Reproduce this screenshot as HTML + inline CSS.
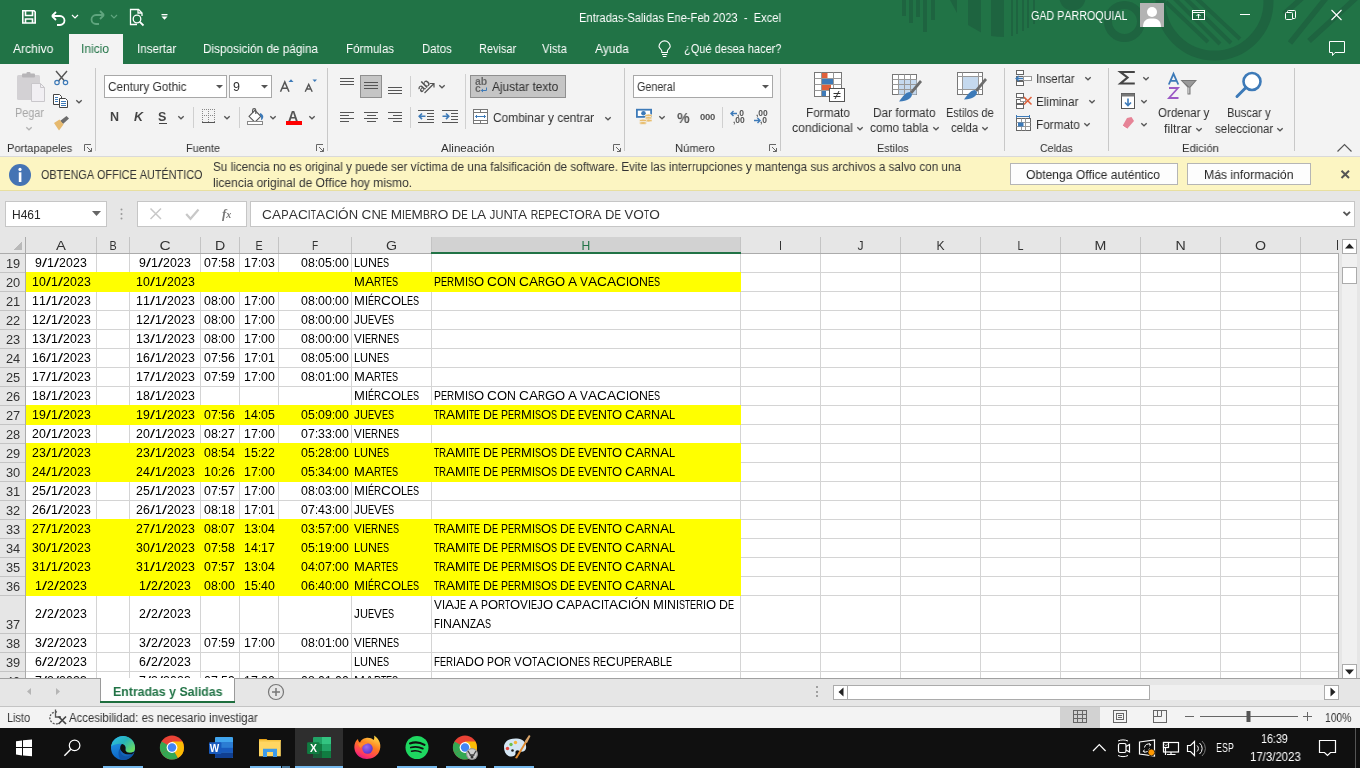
<!DOCTYPE html><html><head><meta charset="utf-8"><style>
*{margin:0;padding:0;box-sizing:border-box}
html,body{width:1360px;height:768px;overflow:hidden;background:#f3f3f3;font-family:"Liberation Sans",sans-serif;font-kerning:none}
.a{position:absolute}
.t{position:absolute;white-space:pre;line-height:1;transform-origin:0 0;font-kerning:none;will-change:transform}
svg{position:absolute;overflow:visible;will-change:transform}
svg text{font-family:"Liberation Sans",sans-serif;font-kerning:none}
</style></head><body><div class="a" style="left:0;top:0;width:1360px;height:64px;background:#217346"></div>
<svg style="left:0;top:0" width="1360" height="64" viewBox="0 0 1360 64">
<g fill="#1e6440">
<rect x="902" y="0" width="4" height="16"/><rect x="909" y="0" width="4" height="23"/><rect x="916" y="0" width="4" height="17"/>
<rect x="923" y="0" width="4" height="32"/><rect x="931" y="0" width="4" height="20"/>
<path d="M950 0 L957 0 L957 13 Z"/><circle cx="1072.5" cy="-2.5" r="13"/>
<path d="M968 0 H981 V32.5 L968 25 Z"/>
<path d="M991 0 H1004 V37 Q998 37 991 36 Z"/>
<rect x="1011" y="0" width="2" height="36"/><rect x="1016" y="0" width="2" height="34"/><rect x="1022" y="0" width="2" height="31"/>
<rect x="1027" y="0" width="2" height="28"/><rect x="1033" y="0" width="2" height="24"/>
</g>
<g fill="none" stroke="#1e6440">
<circle cx="1124.5" cy="21.5" r="16.5" stroke-width="8"/>
<circle cx="1214.5" cy="1.5" r="54" stroke-width="10"/>
<path d="M1166 2 L1208 42 M1174 -2 L1220 44 M1183 -4 L1231 43 M1193 -5 L1240 39" stroke-width="4"/>
<path d="M1326 -2 L1290 43 M1356 -2 L1309 41 M1302 -2 L1284 14" stroke-width="5.5"/>
</g>
</svg>
<svg style="left:0;top:0" width="200" height="34" viewBox="0 0 200 34">
<g fill="none" stroke="#fff" stroke-width="1.6">
<path d="M22.8 10.8 H34 L35.2 12 V23 H22.8 Z"/>
<path d="M25.5 11 V15.5 H32.5 V11"/>
<path d="M25.5 23 V19 H32.5 V23"/>
<path d="M52 16 L56 12 M52 16 L56 20 M52 16 H60 A4.5 4.5 0 0 1 60 25 H57" stroke-width="1.8"/>
<path d="M72 15 L75 18 L78 15" stroke-width="1.2"/>
</g>
<g fill="none" stroke="#5fa57e" stroke-width="1.8">
<path d="M104 15 L100 11 M104 15 L100 19 M104 15 H96 A4.5 4.5 0 0 0 96 24 H99"/>
<path d="M111 15 L114 18 L117 15" stroke-width="1.2"/>
</g>
<g fill="none" stroke="#fff" stroke-width="1.3">
<path d="M137 24.5 H130.5 V9.5 H138.5 L142 13 V16"/>
<path d="M138 9.5 V13 H142"/>
<circle cx="137" cy="19" r="3.8"/>
<path d="M139.8 21.8 L143.5 25.5" stroke-width="1.8"/>
</g>
<g fill="#fff"><rect x="161.5" y="14" width="6" height="1.3"/><path d="M161.5 16.5 H167.5 L164.5 19.8 Z"/></g>
</svg>
<div class="t " style="left:578.50px;top:12.34px;font-size:12px;color:#fff;font-weight:normal;transform:scaleX(0.9290);">Entradas-Salidas Ene-Feb 2023  -  Excel</div>
<div class="t " style="left:1031.00px;top:9.62px;font-size:12.5px;color:#fff;font-weight:normal;transform:scaleX(0.8576);">GAD PARROQUIAL</div>
<svg style="left:1140px;top:3px" width="24" height="24" viewBox="0 0 24 24">
<rect width="24" height="24" fill="#b3b3b3"/>
<circle cx="12" cy="9" r="5" fill="#fff"/>
<path d="M3 24 C3 17 7 15.5 12 15.5 C17 15.5 21 17 21 24 Z" fill="#fff"/>
</svg>
<svg style="left:1180px;top:0" width="180" height="64" viewBox="1180 0 180 64">
<g fill="none" stroke="#fff" stroke-width="1">
<rect x="1192.5" y="10.5" width="12" height="9"/>
<path d="M1192.5 12.5 H1204.5"/>
<path d="M1198.5 18.5 V14 M1196.5 16 L1198.5 14 L1200.5 16"/>
<path d="M1240 14.5 H1250"/>
<rect x="1285.5" y="12.5" width="7" height="7" rx="1"/>
<path d="M1287.5 12.5 V11.5 Q1287.5 10.5 1288.5 10.5 H1294.5 Q1295.5 10.5 1295.5 11.5 V17.5 Q1295.5 18.5 1294.5 18.5 H1292.5"/>
<path d="M1331.5 10 L1341.5 20 M1341.5 10 L1331.5 20" stroke-width="1.1"/>
<path d="M1329.5 41.5 H1344.5 V52.5 H1335 L1332.5 55.5 V52.5 H1329.5 Z"/>
</g></svg>
<div class="a" style="left:69px;top:34px;width:54px;height:31px;background:#f3f3f3"></div>
<div class="t " style="left:13.00px;top:43.17px;font-size:12.5px;color:#fff;font-weight:normal;transform:scaleX(0.9657);">Archivo</div>
<div class="t " style="left:81.25px;top:43.17px;font-size:12.5px;color:#217346;font-weight:normal;transform:scaleX(0.9595);">Inicio</div>
<div class="t " style="left:137.00px;top:43.17px;font-size:12.5px;color:#fff;font-weight:normal;transform:scaleX(0.9262);">Insertar</div>
<div class="t " style="left:203.25px;top:43.17px;font-size:12.5px;color:#fff;font-weight:normal;transform:scaleX(0.9403);">Disposición de página</div>
<div class="t " style="left:346.20px;top:43.17px;font-size:12.5px;color:#fff;font-weight:normal;transform:scaleX(0.9233);">Fórmulas</div>
<div class="t " style="left:422.00px;top:43.17px;font-size:12.5px;color:#fff;font-weight:normal;transform:scaleX(0.9095);">Datos</div>
<div class="t " style="left:478.80px;top:43.17px;font-size:12.5px;color:#fff;font-weight:normal;transform:scaleX(0.8780);">Revisar</div>
<div class="t " style="left:542.40px;top:43.17px;font-size:12.5px;color:#fff;font-weight:normal;transform:scaleX(0.8996);">Vista</div>
<div class="t " style="left:594.80px;top:43.17px;font-size:12.5px;color:#fff;font-weight:normal;transform:scaleX(0.9536);">Ayuda</div>
<div class="t " style="left:684.00px;top:43.17px;font-size:12.5px;color:#fff;font-weight:normal;transform:scaleX(0.8825);">¿Qué desea hacer?</div>
<svg style="left:655px;top:38px" width="20" height="22" viewBox="655 38 20 22">
<g fill="none" stroke="#fff" stroke-width="1.1">
<path d="M661.8 52.5 V51 C661.8 49.5 659 48.2 659 46.5 A5.6 5.6 0 0 1 670.2 46.5 C670.2 48.2 667.4 49.5 667.4 51 V52.5 Z"/>
<path d="M662 54.5 H667.2 M662.8 56.5 H666.4"/>
</g></svg>
<div class="a" style="left:0;top:64px;width:1360px;height:92px;background:#f3f3f3"></div>
<div class="a" style="left:0;top:156px;width:1360px;height:1px;background:#d9d9d9"></div>
<div class="a" style="left:95.0px;top:68px;width:1px;height:83px;background:#c8c8c8"></div>
<div class="a" style="left:327.0px;top:68px;width:1px;height:83px;background:#c8c8c8"></div>
<div class="a" style="left:624.0px;top:68px;width:1px;height:83px;background:#c8c8c8"></div>
<div class="a" style="left:780.0px;top:68px;width:1px;height:83px;background:#c8c8c8"></div>
<div class="a" style="left:1004.0px;top:68px;width:1px;height:83px;background:#c8c8c8"></div>
<div class="a" style="left:1108.0px;top:68px;width:1px;height:83px;background:#c8c8c8"></div>
<div class="a" style="left:1294.0px;top:68px;width:1px;height:83px;background:#c8c8c8"></div>
<div class="t " style="left:6.80px;top:142.97px;font-size:11.5px;color:#303030;font-weight:normal;transform:scaleX(0.9621);">Portapapeles</div>
<div class="t " style="left:185.60px;top:142.97px;font-size:11.5px;color:#303030;font-weight:normal;transform:scaleX(0.9496);">Fuente</div>
<div class="t " style="left:441.00px;top:142.97px;font-size:11.5px;color:#303030;font-weight:normal;transform:scaleX(1.0082);">Alineación</div>
<div class="t " style="left:674.60px;top:142.97px;font-size:11.5px;color:#303030;font-weight:normal;transform:scaleX(0.9731);">Número</div>
<div class="t " style="left:876.60px;top:142.97px;font-size:11.5px;color:#303030;font-weight:normal;transform:scaleX(0.9389);">Estilos</div>
<div class="t " style="left:1039.70px;top:142.97px;font-size:11.5px;color:#303030;font-weight:normal;transform:scaleX(0.9163);">Celdas</div>
<div class="t " style="left:1182.40px;top:142.97px;font-size:11.5px;color:#303030;font-weight:normal;transform:scaleX(0.9783);">Edición</div>
<svg style="left:84px;top:144px" width="9" height="9" viewBox="0 0 9 9"><g fill="none" stroke="#666" stroke-width="1">
<path d="M0.5 7 V0.5 H7"/><path d="M3 3 L7.5 7.5 M7.5 4 V7.5 H4"/></g></svg>
<svg style="left:316px;top:144px" width="9" height="9" viewBox="0 0 9 9"><g fill="none" stroke="#666" stroke-width="1">
<path d="M0.5 7 V0.5 H7"/><path d="M3 3 L7.5 7.5 M7.5 4 V7.5 H4"/></g></svg>
<svg style="left:613px;top:144px" width="9" height="9" viewBox="0 0 9 9"><g fill="none" stroke="#666" stroke-width="1">
<path d="M0.5 7 V0.5 H7"/><path d="M3 3 L7.5 7.5 M7.5 4 V7.5 H4"/></g></svg>
<svg style="left:769px;top:144px" width="9" height="9" viewBox="0 0 9 9"><g fill="none" stroke="#666" stroke-width="1">
<path d="M0.5 7 V0.5 H7"/><path d="M3 3 L7.5 7.5 M7.5 4 V7.5 H4"/></g></svg>
<svg style="left:1336px;top:143px" width="17" height="10" viewBox="0 0 17 10"><path d="M1.5 8.5 L8.5 1.5 L15.5 8.5" fill="none" stroke="#555" stroke-width="1.2"/></svg>
<svg style="left:14px;top:70px" width="34" height="34" viewBox="14 70 34 34">
<rect x="17" y="75" width="23" height="25" rx="1.5" fill="#d3d1d4"/>
<rect x="22" y="73.5" width="13" height="4" rx="1" fill="#b7b5b8"/>
<rect x="26.5" y="72" width="4" height="3" rx="1" fill="#b7b5b8"/>
<path d="M31.5 83.5 H40.5 L44.5 87.5 V101.5 H31.5 Z" fill="#f1eff3" stroke="#c9c7cb" stroke-width="1"/>
<path d="M40.5 83.5 V87.5 H44.5" fill="none" stroke="#c9c7cb" stroke-width="1"/>
</svg>
<div class="t " style="left:14.60px;top:107.04px;font-size:12px;color:#a6a6a6;font-weight:normal;transform:scaleX(0.9056);">Pegar</div>
<svg style="left:25px;top:126.0px" width="8" height="5" viewBox="0 0 8 5"><path d="M1.3 1.2 L4 3.8 L6.7 1.2" fill="none" stroke="#b3b3b3" stroke-width="1.3"/></svg>
<svg style="left:52px;top:69px" width="20" height="64" viewBox="52 69 20 64">
<g fill="none" stroke="#555" stroke-width="1.4"><path d="M56 71 L64.5 81 M67 71 L58.5 81"/></g>
<g fill="none" stroke="#3d7ab8" stroke-width="1.2"><circle cx="57" cy="82.5" r="2.2"/><circle cx="65.5" cy="82.5" r="2.2"/></g>
<g fill="#fff" stroke="#444" stroke-width="1">
<path d="M53.5 94.5 H59.5 L61.5 96.5 V104.5 H53.5 Z"/>
<path d="M59.5 98.5 H65.5 L67.5 100.5 V107.5 H59.5 Z"/></g>
<g fill="#3d7ab8"><rect x="55" y="97" width="3" height="1"/><rect x="55" y="99" width="3" height="1"/><rect x="55" y="101" width="3" height="1"/>
<rect x="61" y="101" width="5" height="1"/><rect x="61" y="103" width="5" height="1"/><rect x="61" y="105" width="5" height="1"/></g>
<path d="M60 121 L66.5 116 L69 118.5 L63 124 Z" fill="#6c6c6c"/>
<path d="M54 123 L59.5 119.5 L63.5 124.5 L59 130.5 Z" fill="#e6b96e"/>
</svg>
<svg style="left:75px;top:99.0px" width="8" height="5" viewBox="0 0 8 5"><path d="M1.3 1.2 L4 3.8 L6.7 1.2" fill="none" stroke="#555" stroke-width="1.3"/></svg>
<div class="a" style="left:104px;top:75px;width:123px;height:23px;background:#fff;border:1px solid #a8a8a8"></div>
<div class="a" style="left:229px;top:75px;width:43px;height:23px;background:#fff;border:1px solid #a8a8a8"></div>
<div class="t " style="left:107.60px;top:80.92px;font-size:12.5px;color:#303030;font-weight:normal;transform:scaleX(0.9428);">Century Gothic</div>
<div class="t " style="left:232.80px;top:80.92px;font-size:12.5px;color:#303030;font-weight:normal;">9</div>
<svg style="left:216.1px;top:84.5px" width="7" height="4" viewBox="0 0 7 4"><path d="M0 0 H7 L3.5 3.5 Z" fill="#555"/></svg>
<svg style="left:261.0px;top:84.5px" width="7" height="4" viewBox="0 0 7 4"><path d="M0 0 H7 L3.5 3.5 Z" fill="#555"/></svg>
<svg style="left:278px;top:78px" width="40" height="16" viewBox="278 78 40 16">
<path d="M280.5 91.8 L284.8 82 L289 91.8 M282.2 88.3 H287.4" fill="none" stroke="#555" stroke-width="1.5"/>
<path d="M288.5 82 L291 79.2 L293.5 82 Z" fill="#3d7ab8"/>
<path d="M305.2 91.8 L308.7 84.4 L312.2 91.8 M306.6 89 H310.8" fill="none" stroke="#555" stroke-width="1.4"/>
<path d="M312.5 79.5 H317 L314.75 82 Z" fill="#3d7ab8"/>
</svg>
<div class="t" style="left:110.3px;top:111px;font-size:12.5px;font-weight:bold;color:#444">N</div>
<div class="t" style="left:133.5px;top:111px;font-size:12.5px;font-weight:bold;font-style:italic;color:#444">K</div>
<div class="t" style="left:158.4px;top:111px;font-size:12.5px;font-weight:bold;color:#444">S</div>
<div class="a" style="left:158.5px;top:123px;width:8.5px;height:1px;background:#444"></div>
<svg style="left:177px;top:115.0px" width="8" height="5" viewBox="0 0 8 5"><path d="M1.3 1.2 L4 3.8 L6.7 1.2" fill="none" stroke="#555" stroke-width="1.3"/></svg>
<div class="a" style="left:193px;top:107px;width:1px;height:21px;background:#d0d0d0"></div>
<div class="a" style="left:239px;top:107px;width:1px;height:21px;background:#d0d0d0"></div>
<svg style="left:200px;top:108px" width="20" height="18" viewBox="200 108 20 18" shape-rendering="crispEdges"><g fill="#888"><rect x="202" y="109" width="1" height="1"/><rect x="202" y="115" width="1" height="1"/><rect x="202" y="109" width="1" height="1"/><rect x="208" y="109" width="1" height="1"/><rect x="214" y="109" width="1" height="1"/><rect x="204" y="109" width="1" height="1"/><rect x="204" y="115" width="1" height="1"/><rect x="202" y="111" width="1" height="1"/><rect x="208" y="111" width="1" height="1"/><rect x="214" y="111" width="1" height="1"/><rect x="206" y="109" width="1" height="1"/><rect x="206" y="115" width="1" height="1"/><rect x="202" y="113" width="1" height="1"/><rect x="208" y="113" width="1" height="1"/><rect x="214" y="113" width="1" height="1"/><rect x="208" y="109" width="1" height="1"/><rect x="208" y="115" width="1" height="1"/><rect x="202" y="115" width="1" height="1"/><rect x="208" y="115" width="1" height="1"/><rect x="214" y="115" width="1" height="1"/><rect x="210" y="109" width="1" height="1"/><rect x="210" y="115" width="1" height="1"/><rect x="202" y="117" width="1" height="1"/><rect x="208" y="117" width="1" height="1"/><rect x="214" y="117" width="1" height="1"/><rect x="212" y="109" width="1" height="1"/><rect x="212" y="115" width="1" height="1"/><rect x="202" y="119" width="1" height="1"/><rect x="208" y="119" width="1" height="1"/><rect x="214" y="119" width="1" height="1"/><rect x="214" y="109" width="1" height="1"/><rect x="214" y="115" width="1" height="1"/><rect x="202" y="121" width="1" height="1"/><rect x="208" y="121" width="1" height="1"/><rect x="214" y="121" width="1" height="1"/><rect x="202" y="115" width="1" height="1"/><rect x="204" y="115" width="1" height="1"/><rect x="206" y="115" width="1" height="1"/><rect x="208" y="115" width="1" height="1"/><rect x="210" y="115" width="1" height="1"/><rect x="212" y="115" width="1" height="1"/><rect x="214" y="115" width="1" height="1"/></g><rect x="202" y="122" width="13" height="1" fill="#555"/></svg>
<svg style="left:223px;top:115.0px" width="8" height="5" viewBox="0 0 8 5"><path d="M1.3 1.2 L4 3.8 L6.7 1.2" fill="none" stroke="#555" stroke-width="1.3"/></svg>
<svg style="left:244px;top:107px" width="22" height="20" viewBox="244 107 22 20">
<path d="M249 116.3 L254.9 110.4 L260.8 116.3 L254.9 122.2 Z" fill="#fff" stroke="#555" stroke-width="1.1"/>
<path d="M252.6 113 V110.2 Q252.6 108.6 254.2 108.6 Q255.8 108.6 255.8 110.2 V114" fill="none" stroke="#555" stroke-width="1.1"/>
<path d="M260 113 Q263.8 114.5 263.2 117.5 Q262.8 119.5 261 120.3 Q261.8 117 260 115.5 Z" fill="#3d7ab8"/>
<rect x="247.5" y="121.5" width="15" height="3" fill="#fff" stroke="#888" stroke-width="1"/>
</svg>
<svg style="left:269px;top:115.0px" width="8" height="5" viewBox="0 0 8 5"><path d="M1.3 1.2 L4 3.8 L6.7 1.2" fill="none" stroke="#555" stroke-width="1.3"/></svg>
<div class="t" style="left:288.2px;top:109.3px;font-size:14px;font-weight:bold;color:#555">A</div>
<div class="a" style="left:286px;top:121px;width:16px;height:4px;background:#ff0000"></div>
<svg style="left:308px;top:115.0px" width="8" height="5" viewBox="0 0 8 5"><path d="M1.3 1.2 L4 3.8 L6.7 1.2" fill="none" stroke="#555" stroke-width="1.3"/></svg>
<div class="a" style="left:360px;top:75px;width:22px;height:23px;background:#c5c5c5;border:1px solid #8f8f8f"></div>
<svg style="left:330px;top:70px" width="140" height="60" viewBox="330 70 140 60"><g fill="#555" shape-rendering="crispEdges"><rect x="340" y="78" width="14" height="1"/><rect x="340" y="81" width="14" height="1"/><rect x="340" y="84" width="14" height="1"/><rect x="364" y="82" width="14" height="1"/><rect x="364" y="85" width="14" height="1"/><rect x="364" y="88" width="14" height="1"/><rect x="388" y="87" width="14" height="1"/><rect x="388" y="90" width="14" height="1"/><rect x="388" y="93" width="14" height="1"/><rect x="340" y="112" width="14" height="1"/><rect x="340" y="115" width="9" height="1"/><rect x="340" y="118" width="14" height="1"/><rect x="340" y="121" width="9" height="1"/><rect x="364" y="112" width="14" height="1"/><rect x="367" y="115" width="9" height="1"/><rect x="364" y="118" width="14" height="1"/><rect x="367" y="121" width="9" height="1"/><rect x="388" y="112" width="14" height="1"/><rect x="393" y="115" width="9" height="1"/><rect x="388" y="118" width="14" height="1"/><rect x="393" y="121" width="9" height="1"/><rect x="418" y="110" width="16" height="1"/><rect x="418" y="122" width="16" height="1"/><rect x="427" y="113" width="7" height="1"/><rect x="427" y="116" width="7" height="1"/><rect x="427" y="119" width="7" height="1"/><rect x="442" y="110" width="16" height="1"/><rect x="442" y="122" width="16" height="1"/><rect x="451" y="113" width="7" height="1"/><rect x="451" y="116" width="7" height="1"/><rect x="451" y="119" width="7" height="1"/></g><g fill="none" stroke="#3d7ab8" stroke-width="1.6"><path d="M419 116.3 H425.5 M422 113.5 L419.2 116.3 L422 119.1"/><path d="M442.5 116.3 H449 M446 113.5 L448.8 116.3 L446 119.1"/></g><g fill="none" stroke="#555" stroke-width="1.2"><path d="M424.5 93 L434 83.5 M430 83.5 H434 V87.5"/></g><text x="0" y="0" font-size="11.5" font-weight="bold" fill="#555" transform="translate(421.5,93) rotate(-45)">ab</text></svg>
<div class="a" style="left:410px;top:76px;width:1px;height:21px;background:#d0d0d0"></div>
<div class="a" style="left:410px;top:107px;width:1px;height:21px;background:#d0d0d0"></div>
<div class="a" style="left:465px;top:74px;width:1px;height:55px;background:#d0d0d0"></div>
<svg style="left:438px;top:84.0px" width="8" height="5" viewBox="0 0 8 5"><path d="M1.3 1.2 L4 3.8 L6.7 1.2" fill="none" stroke="#555" stroke-width="1.3"/></svg>
<div class="a" style="left:470px;top:75px;width:96px;height:23px;background:#c5c5c5;border:1px solid #8f8f8f"></div>
<div class="t" style="left:474.5px;top:77.5px;font-size:10.5px;font-weight:bold;color:#666;line-height:7px">ab<br>c</div>
<svg style="left:480px;top:87px" width="8" height="6" viewBox="480 87 8 6"><path d="M486.5 87.5 V90.5 H481.5 M483 89 L481.3 90.5 L483 92" fill="none" stroke="#3d7ab8" stroke-width="1"/></svg>
<div class="t " style="left:492.00px;top:80.82px;font-size:12.5px;color:#303030;font-weight:normal;transform:scaleX(0.9543);">Ajustar texto</div>
<svg style="left:472px;top:108px" width="17" height="17" viewBox="472 108 17 17">
<rect x="473.5" y="109.5" width="14" height="14" fill="#fff" stroke="#777" stroke-width="1"/>
<path d="M473.5 112.5 H487.5 M473.5 120.5 H487.5 M480.5 109.5 V112.5 M480.5 120.5 V123.5" stroke="#777" stroke-width="1"/>
<path d="M475.5 116.5 H485.5 M477 115 L475.5 116.5 L477 118 M484 115 L485.5 116.5 L484 118" fill="none" stroke="#3d7ab8" stroke-width="1"/>
</svg>
<div class="t " style="left:492.60px;top:111.67px;font-size:12.5px;color:#303030;font-weight:normal;transform:scaleX(0.9521);">Combinar y centrar</div>
<svg style="left:604px;top:115.5px" width="8" height="5" viewBox="0 0 8 5"><path d="M1.3 1.2 L4 3.8 L6.7 1.2" fill="none" stroke="#555" stroke-width="1.3"/></svg>
<div class="a" style="left:633px;top:75px;width:140px;height:23px;background:#fff;border:1px solid #a8a8a8"></div>
<div class="t " style="left:636.90px;top:80.92px;font-size:12.5px;color:#303030;font-weight:normal;transform:scaleX(0.8568);">General</div>
<svg style="left:761.9px;top:84.5px" width="7" height="4" viewBox="0 0 7 4"><path d="M0 0 H7 L3.5 3.5 Z" fill="#555"/></svg>
<svg style="left:634px;top:107px" width="22" height="20" viewBox="634 107 22 20">
<rect x="636" y="108.8" width="16" height="9" fill="#3d7ab8"/>
<path d="M637.8 110.6 H650.2 V116 H637.8 Z" fill="#fff"/>
<circle cx="643.5" cy="113.3" r="2.3" fill="#3d7ab8"/>
<g fill="#e8bd6e" stroke="#f3f3f3" stroke-width="0.7">
<ellipse cx="648.5" cy="115.5" rx="3.6" ry="1.5"/><ellipse cx="648.5" cy="118" rx="3.6" ry="1.5"/><ellipse cx="648.5" cy="120.5" rx="3.6" ry="1.5"/>
<ellipse cx="643" cy="120.5" rx="3.6" ry="1.5"/><ellipse cx="643" cy="123" rx="3.6" ry="1.5"/>
</g>
</svg>
<svg style="left:658px;top:115.0px" width="8" height="5" viewBox="0 0 8 5"><path d="M1.3 1.2 L4 3.8 L6.7 1.2" fill="none" stroke="#555" stroke-width="1.3"/></svg>
<div class="t" style="left:677px;top:110px;font-size:15.5px;font-weight:bold;color:#555;transform:scaleX(0.92)">%</div>
<div class="t" style="left:699.5px;top:111.8px;font-size:9.5px;color:#555;font-weight:bold;letter-spacing:-0.3px">000</div>
<div class="a" style="left:722px;top:107px;width:1px;height:21px;background:#d0d0d0"></div>
<div class="t" style="left:737px;top:109px;font-size:8.5px;color:#555;font-weight:bold">,0</div>
<div class="t" style="left:733px;top:116px;font-size:8.5px;color:#555;font-weight:bold">,00</div>
<div class="t" style="left:756px;top:109px;font-size:8.5px;color:#555;font-weight:bold">,00</div>
<div class="t" style="left:760px;top:116px;font-size:8.5px;color:#555;font-weight:bold">,0</div>
<svg style="left:728px;top:108px" width="44" height="18" viewBox="728 108 44 18"><g fill="none" stroke="#3d7ab8" stroke-width="1.4">
<path d="M731 113.5 H737 M733.5 111 L731 113.5 L733.5 116"/><path d="M754 120.5 H760 M757.5 118 L760 120.5 L757.5 123"/></g></svg>
<svg style="left:812px;top:70px" width="180" height="34" viewBox="812 70 180 34">
<g>
<rect x="814.5" y="72.5" width="27" height="24" fill="#fff" stroke="#777" stroke-width="1"/>
<path d="M814.5 78.5 H841.5 M814.5 84.5 H841.5 M814.5 90.5 H841.5 M821.5 72.5 V96.5 M833.5 72.5 V96.5" stroke="#999" stroke-width="1"/>
<rect x="822" y="73" width="5.5" height="5" fill="#e0603a"/><rect x="822" y="79" width="11" height="5" fill="#3d7ab8"/>
<rect x="822" y="85" width="9" height="5" fill="#e0603a"/><rect x="822" y="91" width="4" height="5" fill="#3d7ab8"/>
<rect x="829.5" y="88.5" width="15" height="13" fill="#fff" stroke="#555" stroke-width="1"/>
<path d="M833.5 93.5 H840.5 M833.5 96.5 H840.5 M839 91 L835 99" stroke="#333" stroke-width="1"/>
</g>
<g>
<rect x="892.5" y="74.5" width="24" height="20" fill="#fff" stroke="#777" stroke-width="1"/>
<rect x="898.5" y="79.5" width="18" height="15" fill="#c5d9ee"/>
<path d="M892.5 79.5 H916.5 M892.5 84.5 H916.5 M892.5 89.5 H916.5 M898.5 74.5 V94.5 M904.5 74.5 V94.5 M910.5 74.5 V94.5" stroke="#999" stroke-width="1"/>
<path d="M910 92 L920 80 L922 82 L912 94 Z" fill="#6c6c6c"/>
<path d="M899 101.5 C903 96 906 92 910 92 L912 94 C912 98 908 101 899 101.5 Z" fill="#3d7ab8"/>
</g>
<g>
<rect x="957.5" y="72.5" width="25" height="22" fill="#fff" stroke="#777" stroke-width="1"/>
<rect x="963" y="77" width="15" height="12" fill="#c5d9ee"/>
<path d="M957.5 76.5 H982.5 M957.5 89.5 H982.5 M962.5 72.5 V94.5 M978.5 72.5 V94.5" stroke="#999" stroke-width="1"/>
<path d="M975 90 L985 78 L987 80 L977 92 Z" fill="#6c6c6c"/>
<path d="M964 99.5 C968 94 971 90 975 90 L977 92 C977 96 973 99 964 99.5 Z" fill="#3d7ab8"/>
</g>
</svg>
<div class="t " style="left:805.60px;top:106.72px;font-size:12.5px;color:#303030;font-weight:normal;transform:scaleX(0.9454);">Formato</div>
<div class="t " style="left:791.70px;top:122.42px;font-size:12.5px;color:#303030;font-weight:normal;transform:scaleX(0.9737);">condicional</div>
<svg style="left:856px;top:126.0px" width="8" height="5" viewBox="0 0 8 5"><path d="M1.3 1.2 L4 3.8 L6.7 1.2" fill="none" stroke="#555" stroke-width="1.3"/></svg>
<div class="t " style="left:873.20px;top:106.72px;font-size:12.5px;color:#303030;font-weight:normal;transform:scaleX(0.9486);">Dar formato</div>
<div class="t " style="left:869.90px;top:122.42px;font-size:12.5px;color:#303030;font-weight:normal;transform:scaleX(0.9535);">como tabla</div>
<svg style="left:932.3px;top:126.0px" width="8" height="5" viewBox="0 0 8 5"><path d="M1.3 1.2 L4 3.8 L6.7 1.2" fill="none" stroke="#555" stroke-width="1.3"/></svg>
<div class="t " style="left:945.60px;top:106.72px;font-size:12.5px;color:#303030;font-weight:normal;transform:scaleX(0.8802);">Estilos de</div>
<div class="t " style="left:950.50px;top:122.42px;font-size:12.5px;color:#303030;font-weight:normal;transform:scaleX(0.9069);">celda</div>
<svg style="left:981.2px;top:126.0px" width="8" height="5" viewBox="0 0 8 5"><path d="M1.3 1.2 L4 3.8 L6.7 1.2" fill="none" stroke="#555" stroke-width="1.3"/></svg>
<svg style="left:1012px;top:68px" width="24" height="66" viewBox="1012 68 24 66">
<g fill="#fff" stroke="#666" stroke-width="1">
<rect x="1016.5" y="70.5" width="7" height="4"/><rect x="1016.5" y="76.5" width="7" height="4"/><rect x="1016.5" y="81.5" width="7" height="4"/>
<rect x="1023.5" y="76.5" width="8" height="4" stroke="#999"/>
<rect x="1016.5" y="93.5" width="7" height="4"/><rect x="1016.5" y="99.5" width="7" height="4"/><rect x="1016.5" y="104.5" width="7" height="4"/>
<rect x="1020.5" y="98.5" width="5" height="3" stroke="#999"/>
<rect x="1016.5" y="118.5" width="14" height="12"/>
</g>
<path d="M1016.5 122.5 H1030.5 M1016.5 126.5 H1030.5 M1021.5 118.5 V130.5 M1025.5 118.5 V130.5" stroke="#999" stroke-width="1"/>
<rect x="1018" y="122.5" width="5.5" height="4" fill="#3d7ab8"/>
<path d="M1016 116.5 H1030 M1016.5 115 V118 M1029.5 115 V118" stroke="#3d7ab8" stroke-width="1"/>
<path d="M1016 78.5 H1023 M1019 76 L1016.2 78.5 L1019 81" fill="none" stroke="#3d7ab8" stroke-width="1.4"/>
<path d="M1024 97 L1031.5 104.5 M1031.5 97 L1024 104.5" stroke="#e0603a" stroke-width="1.5"/>
</svg>
<div class="t " style="left:1035.50px;top:73.12px;font-size:12.5px;color:#303030;font-weight:normal;transform:scaleX(0.9109);">Insertar</div>
<svg style="left:1084px;top:76.0px" width="8" height="5" viewBox="0 0 8 5"><path d="M1.3 1.2 L4 3.8 L6.7 1.2" fill="none" stroke="#555" stroke-width="1.3"/></svg>
<div class="t " style="left:1035.50px;top:95.92px;font-size:12.5px;color:#303030;font-weight:normal;transform:scaleX(0.9414);">Eliminar</div>
<svg style="left:1088px;top:99.0px" width="8" height="5" viewBox="0 0 8 5"><path d="M1.3 1.2 L4 3.8 L6.7 1.2" fill="none" stroke="#555" stroke-width="1.3"/></svg>
<div class="t " style="left:1035.50px;top:118.72px;font-size:12.5px;color:#303030;font-weight:normal;transform:scaleX(0.9433);">Formato</div>
<svg style="left:1083.3px;top:122.0px" width="8" height="5" viewBox="0 0 8 5"><path d="M1.3 1.2 L4 3.8 L6.7 1.2" fill="none" stroke="#555" stroke-width="1.3"/></svg>
<svg style="left:1116px;top:68px" width="85" height="66" viewBox="1116 68 85 66">
<path d="M1134.8 72 H1120.5 L1127.5 77.5 L1120.5 83.5 H1134.8" fill="none" stroke="#444" stroke-width="2.2"/>
<rect x="1121.5" y="93.5" width="13" height="15" fill="#fff" stroke="#555" stroke-width="1"/>
<rect x="1121.5" y="93.5" width="13" height="3" fill="#777"/>
<path d="M1128 98.5 V105 M1125 102.5 L1128 105.5 L1131 102.5" fill="none" stroke="#3d7ab8" stroke-width="1.6"/>
<path d="M1127 118 L1131.5 117 L1134 121 L1127 129 L1122.5 126 Z" fill="#e68396"/>
<path d="M1121.8 125.5 L1127.2 129.2" stroke="#fff" stroke-width="1"/>
<path d="M1168.8 84.5 L1173.5 73.8 L1178.3 84.5 M1170.5 80.8 H1176.5" fill="none" stroke="#3d7ab8" stroke-width="1.8"/>
<path d="M1169 88 H1178 L1169 98 H1178.5" fill="none" stroke="#9b59c5" stroke-width="1.8"/>
<path d="M1180.5 80 H1197 L1190.5 87.5 V94.5 H1187.5 V87.5 Z" fill="#777"/>
<path d="M1182.5 81 H1195 L1189.5 87" fill="#999"/>
<path d="M1188.8 87.5 V93.5" stroke="#fff" stroke-width="0.8"/>
</svg>
<svg style="left:1142px;top:76.0px" width="8" height="5" viewBox="0 0 8 5"><path d="M1.3 1.2 L4 3.8 L6.7 1.2" fill="none" stroke="#555" stroke-width="1.3"/></svg>
<svg style="left:1140px;top:98.5px" width="8" height="5" viewBox="0 0 8 5"><path d="M1.3 1.2 L4 3.8 L6.7 1.2" fill="none" stroke="#555" stroke-width="1.3"/></svg>
<svg style="left:1140px;top:122.0px" width="8" height="5" viewBox="0 0 8 5"><path d="M1.3 1.2 L4 3.8 L6.7 1.2" fill="none" stroke="#555" stroke-width="1.3"/></svg>
<svg style="left:1232px;top:70px" width="34" height="32" viewBox="1232 70 34 32">
<circle cx="1252" cy="81.5" r="8.5" fill="#fff" stroke="#3d7ab8" stroke-width="2.6"/>
<path d="M1246 87.5 L1237 96.5" stroke="#3d7ab8" stroke-width="3" stroke-linecap="round"/>
</svg>
<div class="t " style="left:1157.80px;top:106.92px;font-size:12.5px;color:#303030;font-weight:normal;transform:scaleX(0.9248);">Ordenar y</div>
<div class="t " style="left:1164.30px;top:122.62px;font-size:12.5px;color:#303030;font-weight:normal;transform:scaleX(0.9900);">filtrar</div>
<svg style="left:1195px;top:126.5px" width="8" height="5" viewBox="0 0 8 5"><path d="M1.3 1.2 L4 3.8 L6.7 1.2" fill="none" stroke="#555" stroke-width="1.3"/></svg>
<div class="t " style="left:1227.40px;top:106.92px;font-size:12.5px;color:#303030;font-weight:normal;transform:scaleX(0.8966);">Buscar y</div>
<div class="t " style="left:1214.70px;top:122.62px;font-size:12.5px;color:#303030;font-weight:normal;transform:scaleX(0.9221);">seleccionar</div>
<svg style="left:1276px;top:126.5px" width="8" height="5" viewBox="0 0 8 5"><path d="M1.3 1.2 L4 3.8 L6.7 1.2" fill="none" stroke="#555" stroke-width="1.3"/></svg>
<div class="a" style="left:0;top:157px;width:1360px;height:34px;background:#fcf5c2;border-bottom:1px solid #e8dfa0"></div>
<svg style="left:8px;top:163px" width="24" height="24" viewBox="8 163 24 24">
<circle cx="20" cy="175" r="11" fill="#4574b4"/>
<circle cx="20" cy="169.4" r="1.6" fill="#fff"/><rect x="18.8" y="172.3" width="2.6" height="9.7" fill="#fff"/>
</svg>
<div class="t " style="left:40.50px;top:169.09px;font-size:12px;color:#333;font-weight:normal;transform:scaleX(0.9039);">OBTENGA OFFICE AUTÉNTICO</div>
<div class="t " style="left:213.40px;top:161.22px;font-size:12.5px;color:#333;font-weight:normal;transform:scaleX(0.9386);">Su licencia no es original y puede ser víctima de una falsificación de software. Evite las interrupciones y mantenga sus archivos a salvo con una</div>
<div class="t " style="left:213.40px;top:176.52px;font-size:12.5px;color:#333;font-weight:normal;transform:scaleX(0.9649);">licencia original de Office hoy mismo.</div>
<div class="a" style="left:1010px;top:163px;width:168px;height:22px;background:#fdfdfd;border:1px solid #b5b5b5"></div>
<div class="t " style="left:1026.00px;top:168.52px;font-size:12.5px;color:#262626;font-weight:normal;transform:scaleX(0.9690);">Obtenga Office auténtico</div>
<div class="a" style="left:1187px;top:163px;width:124px;height:22px;background:#fdfdfd;border:1px solid #b5b5b5"></div>
<div class="t " style="left:1203.50px;top:168.52px;font-size:12.5px;color:#262626;font-weight:normal;transform:scaleX(0.9760);">Más información</div>
<svg style="left:1338px;top:168px" width="14" height="14" viewBox="1338 168 14 14"><path d="M1341.5 170.8 L1349 178 M1349 170.8 L1341.5 178" stroke="#555" stroke-width="2"/></svg>
<div class="a" style="left:0;top:191px;width:1360px;height:46px;background:#e6e6e6"></div>
<div class="a" style="left:5px;top:201px;width:102px;height:26px;background:#fff;border:1px solid #c6c6c6"></div>
<div class="t " style="left:12.00px;top:209.09px;font-size:12px;color:#262626;font-weight:normal;transform:scaleX(1.0004);">H461</div>
<svg style="left:92px;top:211px" width="9" height="5" viewBox="0 0 9 5"><path d="M0 0 H9 L4.5 5 Z" fill="#666"/></svg>
<svg style="left:119px;top:207px" width="5" height="14" viewBox="0 0 5 14"><g fill="#999"><circle cx="2.5" cy="2.5" r="1"/><circle cx="2.5" cy="7" r="1"/><circle cx="2.5" cy="11.5" r="1"/></g></svg>
<div class="a" style="left:137px;top:201px;width:110px;height:26px;background:#fff;border:1px solid #c6c6c6"></div>
<svg style="left:145px;top:205px" width="95" height="18" viewBox="145 205 95 18">
<path d="M150.5 208.5 L161 219 M161 208.5 L150.5 219" stroke="#c8c8c8" stroke-width="1.5"/>
<path d="M186.2 214 L190.5 218.8 L198.5 209.5" fill="none" stroke="#c8c8c8" stroke-width="2.2"/>
</svg>
<div class="t" style="left:222px;top:207px;font-size:13px;font-style:italic;font-weight:bold;color:#777;font-family:'Liberation Serif',serif">f<span style="font-size:10px">x</span></div>
<div class="a" style="left:250px;top:201px;width:1105px;height:26px;background:#fff;border:1px solid #c6c6c6"></div>
<svg style="left:1342px;top:210px" width="10" height="7" viewBox="0 0 10 7"><path d="M1.5 1.8 L4.8 5 L8 1.8" fill="none" stroke="#555" stroke-width="1.8"/></svg>
<svg style="left:0;top:0" width="1360" height="768" viewBox="0 0 1360 768"><text x="249.63 259.16 274.90 283.71 300.94 309.75 322.00 344.30 372.16 392.01 416.88 454.23 493.44 532.35 546.96 564.35 603.09 618.38" y="219.2" font-size="13" fill="#333" transform="scale(1.05,1)" >CAACACÓCMMOAACOAOO</text><text x="330.88 583.02 641.00" y="219.2" font-size="13" fill="#333" transform="scale(0.85,1)" >PUP</text><text x="384.78 418.96 502.63 528.86 537.66 588.93 663.37 731.26" y="219.2" font-size="13" fill="#333" transform="scale(0.80,1)" >IIIBRLRR</text><text x="478.04 789.01 875.39 990.77" y="219.2" font-size="13" fill="#333" transform="scale(0.65,1)" >TTTT</text><text x="348.69 371.39 451.78 503.51 605.06 624.47" y="219.2" font-size="13" fill="#333" >NNDNDV</text><text x="507.65 540.03 614.88 717.72 736.37 819.26" y="219.2" font-size="13" fill="#333" transform="scale(0.75,1)" >EEEEEE</text><text x="543.98" y="219.2" font-size="13" fill="#333" transform="scale(0.90,1)" >J</text></svg>
<svg style="left:0;top:0" width="1360" height="768" viewBox="0 0 1360 768" shape-rendering="crispEdges"><rect x="0" y="237" width="1338" height="17" fill="#e6e6e6"/><rect x="0" y="254" width="25" height="424" fill="#e6e6e6"/><rect x="26" y="254" width="1312" height="424" fill="#fff"/><rect x="431" y="237" width="310" height="17" fill="#d2d2d2"/><rect x="96" y="254" width="1" height="424" fill="#d4d4d4"/><rect x="129" y="254" width="1" height="424" fill="#d4d4d4"/><rect x="200" y="254" width="1" height="424" fill="#d4d4d4"/><rect x="239" y="254" width="1" height="424" fill="#d4d4d4"/><rect x="278" y="254" width="1" height="424" fill="#d4d4d4"/><rect x="351" y="254" width="1" height="424" fill="#d4d4d4"/><rect x="431" y="254" width="1" height="424" fill="#d4d4d4"/><rect x="740" y="254" width="1" height="424" fill="#d4d4d4"/><rect x="820" y="254" width="1" height="424" fill="#d4d4d4"/><rect x="900" y="254" width="1" height="424" fill="#d4d4d4"/><rect x="980" y="254" width="1" height="424" fill="#d4d4d4"/><rect x="1060" y="254" width="1" height="424" fill="#d4d4d4"/><rect x="1140" y="254" width="1" height="424" fill="#d4d4d4"/><rect x="1220" y="254" width="1" height="424" fill="#d4d4d4"/><rect x="1300" y="254" width="1" height="424" fill="#d4d4d4"/><rect x="26" y="272" width="1312" height="1" fill="#d4d4d4"/><rect x="0" y="272" width="25" height="1" fill="#c4c4c4"/><rect x="26" y="291" width="1312" height="1" fill="#d4d4d4"/><rect x="0" y="291" width="25" height="1" fill="#c4c4c4"/><rect x="26" y="310" width="1312" height="1" fill="#d4d4d4"/><rect x="0" y="310" width="25" height="1" fill="#c4c4c4"/><rect x="26" y="329" width="1312" height="1" fill="#d4d4d4"/><rect x="0" y="329" width="25" height="1" fill="#c4c4c4"/><rect x="26" y="348" width="1312" height="1" fill="#d4d4d4"/><rect x="0" y="348" width="25" height="1" fill="#c4c4c4"/><rect x="26" y="367" width="1312" height="1" fill="#d4d4d4"/><rect x="0" y="367" width="25" height="1" fill="#c4c4c4"/><rect x="26" y="386" width="1312" height="1" fill="#d4d4d4"/><rect x="0" y="386" width="25" height="1" fill="#c4c4c4"/><rect x="26" y="405" width="1312" height="1" fill="#d4d4d4"/><rect x="0" y="405" width="25" height="1" fill="#c4c4c4"/><rect x="26" y="424" width="1312" height="1" fill="#d4d4d4"/><rect x="0" y="424" width="25" height="1" fill="#c4c4c4"/><rect x="26" y="443" width="1312" height="1" fill="#d4d4d4"/><rect x="0" y="443" width="25" height="1" fill="#c4c4c4"/><rect x="26" y="462" width="1312" height="1" fill="#d4d4d4"/><rect x="0" y="462" width="25" height="1" fill="#c4c4c4"/><rect x="26" y="481" width="1312" height="1" fill="#d4d4d4"/><rect x="0" y="481" width="25" height="1" fill="#c4c4c4"/><rect x="26" y="500" width="1312" height="1" fill="#d4d4d4"/><rect x="0" y="500" width="25" height="1" fill="#c4c4c4"/><rect x="26" y="519" width="1312" height="1" fill="#d4d4d4"/><rect x="0" y="519" width="25" height="1" fill="#c4c4c4"/><rect x="26" y="538" width="1312" height="1" fill="#d4d4d4"/><rect x="0" y="538" width="25" height="1" fill="#c4c4c4"/><rect x="26" y="557" width="1312" height="1" fill="#d4d4d4"/><rect x="0" y="557" width="25" height="1" fill="#c4c4c4"/><rect x="26" y="576" width="1312" height="1" fill="#d4d4d4"/><rect x="0" y="576" width="25" height="1" fill="#c4c4c4"/><rect x="26" y="595" width="1312" height="1" fill="#d4d4d4"/><rect x="0" y="595" width="25" height="1" fill="#c4c4c4"/><rect x="26" y="633" width="1312" height="1" fill="#d4d4d4"/><rect x="0" y="633" width="25" height="1" fill="#c4c4c4"/><rect x="26" y="652" width="1312" height="1" fill="#d4d4d4"/><rect x="0" y="652" width="25" height="1" fill="#c4c4c4"/><rect x="26" y="671" width="1312" height="1" fill="#d4d4d4"/><rect x="0" y="671" width="25" height="1" fill="#c4c4c4"/><rect x="96" y="237" width="1" height="16" fill="#c4c4c4"/><rect x="129" y="237" width="1" height="16" fill="#c4c4c4"/><rect x="200" y="237" width="1" height="16" fill="#c4c4c4"/><rect x="239" y="237" width="1" height="16" fill="#c4c4c4"/><rect x="278" y="237" width="1" height="16" fill="#c4c4c4"/><rect x="351" y="237" width="1" height="16" fill="#c4c4c4"/><rect x="431" y="237" width="1" height="16" fill="#c4c4c4"/><rect x="740" y="237" width="1" height="16" fill="#c4c4c4"/><rect x="820" y="237" width="1" height="16" fill="#c4c4c4"/><rect x="900" y="237" width="1" height="16" fill="#c4c4c4"/><rect x="980" y="237" width="1" height="16" fill="#c4c4c4"/><rect x="1060" y="237" width="1" height="16" fill="#c4c4c4"/><rect x="1140" y="237" width="1" height="16" fill="#c4c4c4"/><rect x="1220" y="237" width="1" height="16" fill="#c4c4c4"/><rect x="1300" y="237" width="1" height="16" fill="#c4c4c4"/><rect x="0" y="253" width="1338" height="1" fill="#ababab"/><rect x="25" y="237" width="1" height="441" fill="#ababab"/><rect x="431" y="252" width="310" height="2" fill="#217346"/><path d="M13 250 L22 241 L22 250 Z" fill="#b9b9b9"/><rect x="26" y="272" width="715" height="20" fill="#ffff00"/><rect x="26" y="405" width="715" height="20" fill="#ffff00"/><rect x="26" y="443" width="715" height="20" fill="#ffff00"/><rect x="26" y="462" width="715" height="20" fill="#ffff00"/><rect x="26" y="519" width="715" height="20" fill="#ffff00"/><rect x="26" y="538" width="715" height="20" fill="#ffff00"/><rect x="26" y="557" width="715" height="20" fill="#ffff00"/><rect x="26" y="576" width="715" height="20" fill="#ffff00"/></svg>
<svg style="left:0;top:0" width="1360" height="768" viewBox="0 0 1360 768"><defs><clipPath id="gc"><rect x="0" y="254" width="1338" height="424"/></clipPath></defs><g clip-path="url(#gc)"><text x="36.91 49.54 62.17 69.54 76.91 84.28" y="267" font-size="13" fill="#000" transform="scale(0.95,1)" >912023</text><text x="29.98 38.55" y="267" font-size="13" fill="#000" transform="scale(1.40,1)" >//</text><text x="146.39 159.02 171.65 179.02 186.39 193.75" y="267" font-size="13" fill="#000" transform="scale(0.95,1)" >912023</text><text x="104.27 112.84" y="267" font-size="13" fill="#000" transform="scale(1.40,1)" >//</text><text x="214.81 222.17 232.70 240.07" y="267" font-size="13" fill="#000" transform="scale(0.95,1)" >0758</text><text x="256.43" y="267" font-size="13" fill="#000" transform="scale(0.85,1)" >:</text><text x="256.91 264.28 274.81 282.17" y="267" font-size="13" fill="#000" transform="scale(0.95,1)" >1703</text><text x="303.49" y="267" font-size="13" fill="#000" transform="scale(0.85,1)" >:</text><text x="316.91 324.28 334.81 342.17 352.70 360.07" y="267" font-size="13" fill="#000" transform="scale(0.95,1)" >080500</text><text x="370.55 390.55" y="267" font-size="13" fill="#000" transform="scale(0.85,1)" >::</text><text x="416.39 423.54" y="267" font-size="13" fill="#000" transform="scale(0.85,1)" >LU</text><text x="387.41" y="267" font-size="13" fill="#000" transform="scale(0.95,1)" >N</text><text x="538.52 547.09" y="267" font-size="13" fill="#000" transform="scale(0.70,1)" >ES</text><text x="33.75 41.12 53.75 66.39 73.75 81.12 88.49" y="286" font-size="13" fill="#000" transform="scale(0.95,1)" >1012023</text><text x="32.84 41.41" y="286" font-size="13" fill="#000" transform="scale(1.40,1)" >//</text><text x="143.23 150.60 163.23 175.86 183.23 190.60 197.96" y="286" font-size="13" fill="#000" transform="scale(0.95,1)" >1012023</text><text x="107.12 115.69" y="286" font-size="13" fill="#000" transform="scale(1.40,1)" >//</text><text x="354.09" y="286" font-size="13" fill="#000" >M</text><text x="347.57" y="286" font-size="13" fill="#000" transform="scale(1.05,1)" >A</text><text x="498.64" y="286" font-size="13" fill="#000" transform="scale(0.75,1)" >R</text><text x="586.03" y="286" font-size="13" fill="#000" transform="scale(0.65,1)" >T</text><text x="551.38 559.95" y="286" font-size="13" fill="#000" transform="scale(0.70,1)" >ES</text><text x="542.54" y="286" font-size="13" fill="#000" transform="scale(0.80,1)" >P</text><text x="629.95 668.52 925.66 934.24" y="286" font-size="13" fill="#000" transform="scale(0.70,1)" >ESES</text><text x="595.97 717.31" y="286" font-size="13" fill="#000" transform="scale(0.75,1)" >RR</text><text x="454.09 473.94 496.94 544.94 554.94 628.94" y="286" font-size="13" fill="#000" >MOOGOO</text><text x="547.02 736.43" y="286" font-size="13" fill="#000" transform="scale(0.85,1)" >II</text><text x="463.88 494.35 503.76 540.90 559.95 568.64 578.05 586.73" y="286" font-size="13" fill="#000" transform="scale(1.05,1)" >CCAAACAC</text><text x="533.73 672.67" y="286" font-size="13" fill="#000" transform="scale(0.95,1)" >NN</text><text x="644.55" y="286" font-size="13" fill="#000" transform="scale(0.90,1)" >V</text><text x="33.75 41.12 53.75 66.39 73.75 81.12 88.49" y="305" font-size="13" fill="#000" transform="scale(0.95,1)" >1112023</text><text x="32.84 41.41" y="305" font-size="13" fill="#000" transform="scale(1.40,1)" >//</text><text x="143.23 150.60 163.23 175.86 183.23 190.60 197.96" y="305" font-size="13" fill="#000" transform="scale(0.95,1)" >1112023</text><text x="107.12 115.69" y="305" font-size="13" fill="#000" transform="scale(1.40,1)" >//</text><text x="214.81 222.17 232.70 240.07" y="305" font-size="13" fill="#000" transform="scale(0.95,1)" >0800</text><text x="256.43" y="305" font-size="13" fill="#000" transform="scale(0.85,1)" >:</text><text x="256.91 264.28 274.81 282.17" y="305" font-size="13" fill="#000" transform="scale(0.95,1)" >1700</text><text x="303.49" y="305" font-size="13" fill="#000" transform="scale(0.85,1)" >:</text><text x="316.91 324.28 334.81 342.17 352.70 360.07" y="305" font-size="13" fill="#000" transform="scale(0.95,1)" >080000</text><text x="370.55 390.55" y="305" font-size="13" fill="#000" transform="scale(0.85,1)" >::</text><text x="354.09 390.94" y="305" font-size="13" fill="#000" >MO</text><text x="429.37 471.68" y="305" font-size="13" fill="#000" transform="scale(0.85,1)" >IL</text><text x="525.66 581.38 589.95" y="305" font-size="13" fill="#000" transform="scale(0.70,1)" >ÉES</text><text x="498.64" y="305" font-size="13" fill="#000" transform="scale(0.75,1)" >R</text><text x="362.92" y="305" font-size="13" fill="#000" transform="scale(1.05,1)" >C</text><text x="33.75 41.12 53.75 66.39 73.75 81.12 88.49" y="324" font-size="13" fill="#000" transform="scale(0.95,1)" >1212023</text><text x="32.84 41.41" y="324" font-size="13" fill="#000" transform="scale(1.40,1)" >//</text><text x="143.23 150.60 163.23 175.86 183.23 190.60 197.96" y="324" font-size="13" fill="#000" transform="scale(0.95,1)" >1212023</text><text x="107.12 115.69" y="324" font-size="13" fill="#000" transform="scale(1.40,1)" >//</text><text x="214.81 222.17 232.70 240.07" y="324" font-size="13" fill="#000" transform="scale(0.95,1)" >0800</text><text x="256.43" y="324" font-size="13" fill="#000" transform="scale(0.85,1)" >:</text><text x="256.91 264.28 274.81 282.17" y="324" font-size="13" fill="#000" transform="scale(0.95,1)" >1700</text><text x="303.49" y="324" font-size="13" fill="#000" transform="scale(0.85,1)" >:</text><text x="316.91 324.28 334.81 342.17 352.70 360.07" y="324" font-size="13" fill="#000" transform="scale(0.95,1)" >080000</text><text x="370.55 390.55" y="324" font-size="13" fill="#000" transform="scale(0.85,1)" >::</text><text x="393.42 415.66" y="324" font-size="13" fill="#000" transform="scale(0.90,1)" >JV</text><text x="423.54" y="324" font-size="13" fill="#000" transform="scale(0.85,1)" >U</text><text x="525.66 545.66 554.24" y="324" font-size="13" fill="#000" transform="scale(0.70,1)" >EES</text><text x="33.75 41.12 53.75 66.39 73.75 81.12 88.49" y="343" font-size="13" fill="#000" transform="scale(0.95,1)" >1312023</text><text x="32.84 41.41" y="343" font-size="13" fill="#000" transform="scale(1.40,1)" >//</text><text x="143.23 150.60 163.23 175.86 183.23 190.60 197.96" y="343" font-size="13" fill="#000" transform="scale(0.95,1)" >1312023</text><text x="107.12 115.69" y="343" font-size="13" fill="#000" transform="scale(1.40,1)" >//</text><text x="214.81 222.17 232.70 240.07" y="343" font-size="13" fill="#000" transform="scale(0.95,1)" >0800</text><text x="256.43" y="343" font-size="13" fill="#000" transform="scale(0.85,1)" >:</text><text x="256.91 264.28 274.81 282.17" y="343" font-size="13" fill="#000" transform="scale(0.95,1)" >1700</text><text x="303.49" y="343" font-size="13" fill="#000" transform="scale(0.85,1)" >:</text><text x="316.91 324.28 334.81 342.17 352.70 360.07" y="343" font-size="13" fill="#000" transform="scale(0.95,1)" >080000</text><text x="370.55 390.55" y="343" font-size="13" fill="#000" transform="scale(0.85,1)" >::</text><text x="393.44" y="343" font-size="13" fill="#000" transform="scale(0.90,1)" >V</text><text x="425.84" y="343" font-size="13" fill="#000" transform="scale(0.85,1)" >I</text><text x="521.38 552.81 561.38" y="343" font-size="13" fill="#000" transform="scale(0.70,1)" >EES</text><text x="494.64" y="343" font-size="13" fill="#000" transform="scale(0.75,1)" >R</text><text x="397.94" y="343" font-size="13" fill="#000" transform="scale(0.95,1)" >N</text><text x="33.75 41.12 53.75 66.39 73.75 81.12 88.49" y="362" font-size="13" fill="#000" transform="scale(0.95,1)" >1612023</text><text x="32.84 41.41" y="362" font-size="13" fill="#000" transform="scale(1.40,1)" >//</text><text x="143.23 150.60 163.23 175.86 183.23 190.60 197.96" y="362" font-size="13" fill="#000" transform="scale(0.95,1)" >1612023</text><text x="107.12 115.69" y="362" font-size="13" fill="#000" transform="scale(1.40,1)" >//</text><text x="214.81 222.17 232.70 240.07" y="362" font-size="13" fill="#000" transform="scale(0.95,1)" >0756</text><text x="256.43" y="362" font-size="13" fill="#000" transform="scale(0.85,1)" >:</text><text x="256.91 264.28 274.81 282.17" y="362" font-size="13" fill="#000" transform="scale(0.95,1)" >1701</text><text x="303.49" y="362" font-size="13" fill="#000" transform="scale(0.85,1)" >:</text><text x="316.91 324.28 334.81 342.17 352.70 360.07" y="362" font-size="13" fill="#000" transform="scale(0.95,1)" >080500</text><text x="370.55 390.55" y="362" font-size="13" fill="#000" transform="scale(0.85,1)" >::</text><text x="416.39 423.54" y="362" font-size="13" fill="#000" transform="scale(0.85,1)" >LU</text><text x="387.41" y="362" font-size="13" fill="#000" transform="scale(0.95,1)" >N</text><text x="538.52 547.09" y="362" font-size="13" fill="#000" transform="scale(0.70,1)" >ES</text><text x="33.75 41.12 53.75 66.39 73.75 81.12 88.49" y="381" font-size="13" fill="#000" transform="scale(0.95,1)" >1712023</text><text x="32.84 41.41" y="381" font-size="13" fill="#000" transform="scale(1.40,1)" >//</text><text x="143.23 150.60 163.23 175.86 183.23 190.60 197.96" y="381" font-size="13" fill="#000" transform="scale(0.95,1)" >1712023</text><text x="107.12 115.69" y="381" font-size="13" fill="#000" transform="scale(1.40,1)" >//</text><text x="214.81 222.17 232.70 240.07" y="381" font-size="13" fill="#000" transform="scale(0.95,1)" >0759</text><text x="256.43" y="381" font-size="13" fill="#000" transform="scale(0.85,1)" >:</text><text x="256.91 264.28 274.81 282.17" y="381" font-size="13" fill="#000" transform="scale(0.95,1)" >1700</text><text x="303.49" y="381" font-size="13" fill="#000" transform="scale(0.85,1)" >:</text><text x="316.91 324.28 334.81 342.17 352.70 360.07" y="381" font-size="13" fill="#000" transform="scale(0.95,1)" >080100</text><text x="370.55 390.55" y="381" font-size="13" fill="#000" transform="scale(0.85,1)" >::</text><text x="354.09" y="381" font-size="13" fill="#000" >M</text><text x="347.57" y="381" font-size="13" fill="#000" transform="scale(1.05,1)" >A</text><text x="498.64" y="381" font-size="13" fill="#000" transform="scale(0.75,1)" >R</text><text x="586.03" y="381" font-size="13" fill="#000" transform="scale(0.65,1)" >T</text><text x="551.38 559.95" y="381" font-size="13" fill="#000" transform="scale(0.70,1)" >ES</text><text x="33.75 41.12 53.75 66.39 73.75 81.12 88.49" y="400" font-size="13" fill="#000" transform="scale(0.95,1)" >1812023</text><text x="32.84 41.41" y="400" font-size="13" fill="#000" transform="scale(1.40,1)" >//</text><text x="143.23 150.60 163.23 175.86 183.23 190.60 197.96" y="400" font-size="13" fill="#000" transform="scale(0.95,1)" >1812023</text><text x="107.12 115.69" y="400" font-size="13" fill="#000" transform="scale(1.40,1)" >//</text><text x="354.09 390.94" y="400" font-size="13" fill="#000" >MO</text><text x="429.37 471.68" y="400" font-size="13" fill="#000" transform="scale(0.85,1)" >IL</text><text x="525.66 581.38 589.95" y="400" font-size="13" fill="#000" transform="scale(0.70,1)" >ÉES</text><text x="498.64" y="400" font-size="13" fill="#000" transform="scale(0.75,1)" >R</text><text x="362.92" y="400" font-size="13" fill="#000" transform="scale(1.05,1)" >C</text><text x="542.54" y="400" font-size="13" fill="#000" transform="scale(0.80,1)" >P</text><text x="629.95 668.52 925.66 934.24" y="400" font-size="13" fill="#000" transform="scale(0.70,1)" >ESES</text><text x="595.97 717.31" y="400" font-size="13" fill="#000" transform="scale(0.75,1)" >RR</text><text x="454.09 473.94 496.94 544.94 554.94 628.94" y="400" font-size="13" fill="#000" >MOOGOO</text><text x="547.02 736.43" y="400" font-size="13" fill="#000" transform="scale(0.85,1)" >II</text><text x="463.88 494.35 503.76 540.90 559.95 568.64 578.05 586.73" y="400" font-size="13" fill="#000" transform="scale(1.05,1)" >CCAAACAC</text><text x="533.73 672.67" y="400" font-size="13" fill="#000" transform="scale(0.95,1)" >NN</text><text x="644.55" y="400" font-size="13" fill="#000" transform="scale(0.90,1)" >V</text><text x="33.75 41.12 53.75 66.39 73.75 81.12 88.49" y="419" font-size="13" fill="#000" transform="scale(0.95,1)" >1912023</text><text x="32.84 41.41" y="419" font-size="13" fill="#000" transform="scale(1.40,1)" >//</text><text x="143.23 150.60 163.23 175.86 183.23 190.60 197.96" y="419" font-size="13" fill="#000" transform="scale(0.95,1)" >1912023</text><text x="107.12 115.69" y="419" font-size="13" fill="#000" transform="scale(1.40,1)" >//</text><text x="214.81 222.17 232.70 240.07" y="419" font-size="13" fill="#000" transform="scale(0.95,1)" >0756</text><text x="256.43" y="419" font-size="13" fill="#000" transform="scale(0.85,1)" >:</text><text x="256.91 264.28 274.81 282.17" y="419" font-size="13" fill="#000" transform="scale(0.95,1)" >1405</text><text x="303.49" y="419" font-size="13" fill="#000" transform="scale(0.85,1)" >:</text><text x="316.91 324.28 334.81 342.17 352.70 360.07" y="419" font-size="13" fill="#000" transform="scale(0.95,1)" >050900</text><text x="370.55 390.55" y="419" font-size="13" fill="#000" transform="scale(0.85,1)" >::</text><text x="393.42 415.66" y="419" font-size="13" fill="#000" transform="scale(0.90,1)" >JV</text><text x="423.54" y="419" font-size="13" fill="#000" transform="scale(0.85,1)" >U</text><text x="525.66 545.66 554.24" y="419" font-size="13" fill="#000" transform="scale(0.70,1)" >EES</text><text x="667.57 721.41 933.72" y="419" font-size="13" fill="#000" transform="scale(0.65,1)" >TTT</text><text x="585.31 685.31 858.64" y="419" font-size="13" fill="#000" transform="scale(0.75,1)" >RRR</text><text x="424.71 595.31 604.71 628.52" y="419" font-size="13" fill="#000" transform="scale(1.05,1)" >ACAA</text><text x="455.09 521.09 540.94 611.94" y="419" font-size="13" fill="#000" >MMOO</text><text x="548.19 625.84 786.97" y="419" font-size="13" fill="#000" transform="scale(0.85,1)" >IIL</text><text x="677.09 702.81 725.66 764.24 787.09 812.81 825.66 845.66" y="419" font-size="13" fill="#000" transform="scale(0.70,1)" >EEESSEEE</text><text x="508.46 589.52 629.52 685.31" y="419" font-size="13" fill="#000" transform="scale(0.95,1)" >DDNN</text><text x="626.29" y="419" font-size="13" fill="#000" transform="scale(0.80,1)" >P</text><text x="649.00" y="419" font-size="13" fill="#000" transform="scale(0.90,1)" >V</text><text x="33.75 41.12 53.75 66.39 73.75 81.12 88.49" y="438" font-size="13" fill="#000" transform="scale(0.95,1)" >2012023</text><text x="32.84 41.41" y="438" font-size="13" fill="#000" transform="scale(1.40,1)" >//</text><text x="143.23 150.60 163.23 175.86 183.23 190.60 197.96" y="438" font-size="13" fill="#000" transform="scale(0.95,1)" >2012023</text><text x="107.12 115.69" y="438" font-size="13" fill="#000" transform="scale(1.40,1)" >//</text><text x="214.81 222.17 232.70 240.07" y="438" font-size="13" fill="#000" transform="scale(0.95,1)" >0827</text><text x="256.43" y="438" font-size="13" fill="#000" transform="scale(0.85,1)" >:</text><text x="256.91 264.28 274.81 282.17" y="438" font-size="13" fill="#000" transform="scale(0.95,1)" >1700</text><text x="303.49" y="438" font-size="13" fill="#000" transform="scale(0.85,1)" >:</text><text x="316.91 324.28 334.81 342.17 352.70 360.07" y="438" font-size="13" fill="#000" transform="scale(0.95,1)" >073300</text><text x="370.55 390.55" y="438" font-size="13" fill="#000" transform="scale(0.85,1)" >::</text><text x="393.44" y="438" font-size="13" fill="#000" transform="scale(0.90,1)" >V</text><text x="425.84" y="438" font-size="13" fill="#000" transform="scale(0.85,1)" >I</text><text x="521.38 552.81 561.38" y="438" font-size="13" fill="#000" transform="scale(0.70,1)" >EES</text><text x="494.64" y="438" font-size="13" fill="#000" transform="scale(0.75,1)" >R</text><text x="397.94" y="438" font-size="13" fill="#000" transform="scale(0.95,1)" >N</text><text x="33.75 41.12 53.75 66.39 73.75 81.12 88.49" y="457" font-size="13" fill="#000" transform="scale(0.95,1)" >2312023</text><text x="32.84 41.41" y="457" font-size="13" fill="#000" transform="scale(1.40,1)" >//</text><text x="143.23 150.60 163.23 175.86 183.23 190.60 197.96" y="457" font-size="13" fill="#000" transform="scale(0.95,1)" >2312023</text><text x="107.12 115.69" y="457" font-size="13" fill="#000" transform="scale(1.40,1)" >//</text><text x="214.81 222.17 232.70 240.07" y="457" font-size="13" fill="#000" transform="scale(0.95,1)" >0854</text><text x="256.43" y="457" font-size="13" fill="#000" transform="scale(0.85,1)" >:</text><text x="256.91 264.28 274.81 282.17" y="457" font-size="13" fill="#000" transform="scale(0.95,1)" >1522</text><text x="303.49" y="457" font-size="13" fill="#000" transform="scale(0.85,1)" >:</text><text x="316.91 324.28 334.81 342.17 352.70 360.07" y="457" font-size="13" fill="#000" transform="scale(0.95,1)" >052800</text><text x="370.55 390.55" y="457" font-size="13" fill="#000" transform="scale(0.85,1)" >::</text><text x="416.39 423.54" y="457" font-size="13" fill="#000" transform="scale(0.85,1)" >LU</text><text x="387.41" y="457" font-size="13" fill="#000" transform="scale(0.95,1)" >N</text><text x="538.52 547.09" y="457" font-size="13" fill="#000" transform="scale(0.70,1)" >ES</text><text x="667.57 721.41 933.72" y="457" font-size="13" fill="#000" transform="scale(0.65,1)" >TTT</text><text x="585.31 685.31 858.64" y="457" font-size="13" fill="#000" transform="scale(0.75,1)" >RRR</text><text x="424.71 595.31 604.71 628.52" y="457" font-size="13" fill="#000" transform="scale(1.05,1)" >ACAA</text><text x="455.09 521.09 540.94 611.94" y="457" font-size="13" fill="#000" >MMOO</text><text x="548.19 625.84 786.97" y="457" font-size="13" fill="#000" transform="scale(0.85,1)" >IIL</text><text x="677.09 702.81 725.66 764.24 787.09 812.81 825.66 845.66" y="457" font-size="13" fill="#000" transform="scale(0.70,1)" >EEESSEEE</text><text x="508.46 589.52 629.52 685.31" y="457" font-size="13" fill="#000" transform="scale(0.95,1)" >DDNN</text><text x="626.29" y="457" font-size="13" fill="#000" transform="scale(0.80,1)" >P</text><text x="649.00" y="457" font-size="13" fill="#000" transform="scale(0.90,1)" >V</text><text x="33.75 41.12 53.75 66.39 73.75 81.12 88.49" y="476" font-size="13" fill="#000" transform="scale(0.95,1)" >2412023</text><text x="32.84 41.41" y="476" font-size="13" fill="#000" transform="scale(1.40,1)" >//</text><text x="143.23 150.60 163.23 175.86 183.23 190.60 197.96" y="476" font-size="13" fill="#000" transform="scale(0.95,1)" >2412023</text><text x="107.12 115.69" y="476" font-size="13" fill="#000" transform="scale(1.40,1)" >//</text><text x="214.81 222.17 232.70 240.07" y="476" font-size="13" fill="#000" transform="scale(0.95,1)" >1026</text><text x="256.43" y="476" font-size="13" fill="#000" transform="scale(0.85,1)" >:</text><text x="256.91 264.28 274.81 282.17" y="476" font-size="13" fill="#000" transform="scale(0.95,1)" >1700</text><text x="303.49" y="476" font-size="13" fill="#000" transform="scale(0.85,1)" >:</text><text x="316.91 324.28 334.81 342.17 352.70 360.07" y="476" font-size="13" fill="#000" transform="scale(0.95,1)" >053400</text><text x="370.55 390.55" y="476" font-size="13" fill="#000" transform="scale(0.85,1)" >::</text><text x="354.09" y="476" font-size="13" fill="#000" >M</text><text x="347.57" y="476" font-size="13" fill="#000" transform="scale(1.05,1)" >A</text><text x="498.64" y="476" font-size="13" fill="#000" transform="scale(0.75,1)" >R</text><text x="586.03" y="476" font-size="13" fill="#000" transform="scale(0.65,1)" >T</text><text x="551.38 559.95" y="476" font-size="13" fill="#000" transform="scale(0.70,1)" >ES</text><text x="667.57 721.41 933.72" y="476" font-size="13" fill="#000" transform="scale(0.65,1)" >TTT</text><text x="585.31 685.31 858.64" y="476" font-size="13" fill="#000" transform="scale(0.75,1)" >RRR</text><text x="424.71 595.31 604.71 628.52" y="476" font-size="13" fill="#000" transform="scale(1.05,1)" >ACAA</text><text x="455.09 521.09 540.94 611.94" y="476" font-size="13" fill="#000" >MMOO</text><text x="548.19 625.84 786.97" y="476" font-size="13" fill="#000" transform="scale(0.85,1)" >IIL</text><text x="677.09 702.81 725.66 764.24 787.09 812.81 825.66 845.66" y="476" font-size="13" fill="#000" transform="scale(0.70,1)" >EEESSEEE</text><text x="508.46 589.52 629.52 685.31" y="476" font-size="13" fill="#000" transform="scale(0.95,1)" >DDNN</text><text x="626.29" y="476" font-size="13" fill="#000" transform="scale(0.80,1)" >P</text><text x="649.00" y="476" font-size="13" fill="#000" transform="scale(0.90,1)" >V</text><text x="33.75 41.12 53.75 66.39 73.75 81.12 88.49" y="495" font-size="13" fill="#000" transform="scale(0.95,1)" >2512023</text><text x="32.84 41.41" y="495" font-size="13" fill="#000" transform="scale(1.40,1)" >//</text><text x="143.23 150.60 163.23 175.86 183.23 190.60 197.96" y="495" font-size="13" fill="#000" transform="scale(0.95,1)" >2512023</text><text x="107.12 115.69" y="495" font-size="13" fill="#000" transform="scale(1.40,1)" >//</text><text x="214.81 222.17 232.70 240.07" y="495" font-size="13" fill="#000" transform="scale(0.95,1)" >0757</text><text x="256.43" y="495" font-size="13" fill="#000" transform="scale(0.85,1)" >:</text><text x="256.91 264.28 274.81 282.17" y="495" font-size="13" fill="#000" transform="scale(0.95,1)" >1700</text><text x="303.49" y="495" font-size="13" fill="#000" transform="scale(0.85,1)" >:</text><text x="316.91 324.28 334.81 342.17 352.70 360.07" y="495" font-size="13" fill="#000" transform="scale(0.95,1)" >080300</text><text x="370.55 390.55" y="495" font-size="13" fill="#000" transform="scale(0.85,1)" >::</text><text x="354.09 390.94" y="495" font-size="13" fill="#000" >MO</text><text x="429.37 471.68" y="495" font-size="13" fill="#000" transform="scale(0.85,1)" >IL</text><text x="525.66 581.38 589.95" y="495" font-size="13" fill="#000" transform="scale(0.70,1)" >ÉES</text><text x="498.64" y="495" font-size="13" fill="#000" transform="scale(0.75,1)" >R</text><text x="362.92" y="495" font-size="13" fill="#000" transform="scale(1.05,1)" >C</text><text x="33.75 41.12 53.75 66.39 73.75 81.12 88.49" y="514" font-size="13" fill="#000" transform="scale(0.95,1)" >2612023</text><text x="32.84 41.41" y="514" font-size="13" fill="#000" transform="scale(1.40,1)" >//</text><text x="143.23 150.60 163.23 175.86 183.23 190.60 197.96" y="514" font-size="13" fill="#000" transform="scale(0.95,1)" >2612023</text><text x="107.12 115.69" y="514" font-size="13" fill="#000" transform="scale(1.40,1)" >//</text><text x="214.81 222.17 232.70 240.07" y="514" font-size="13" fill="#000" transform="scale(0.95,1)" >0818</text><text x="256.43" y="514" font-size="13" fill="#000" transform="scale(0.85,1)" >:</text><text x="256.91 264.28 274.81 282.17" y="514" font-size="13" fill="#000" transform="scale(0.95,1)" >1701</text><text x="303.49" y="514" font-size="13" fill="#000" transform="scale(0.85,1)" >:</text><text x="316.91 324.28 334.81 342.17 352.70 360.07" y="514" font-size="13" fill="#000" transform="scale(0.95,1)" >074300</text><text x="370.55 390.55" y="514" font-size="13" fill="#000" transform="scale(0.85,1)" >::</text><text x="393.42 415.66" y="514" font-size="13" fill="#000" transform="scale(0.90,1)" >JV</text><text x="423.54" y="514" font-size="13" fill="#000" transform="scale(0.85,1)" >U</text><text x="525.66 545.66 554.24" y="514" font-size="13" fill="#000" transform="scale(0.70,1)" >EES</text><text x="33.75 41.12 53.75 66.39 73.75 81.12 88.49" y="533" font-size="13" fill="#000" transform="scale(0.95,1)" >2712023</text><text x="32.84 41.41" y="533" font-size="13" fill="#000" transform="scale(1.40,1)" >//</text><text x="143.23 150.60 163.23 175.86 183.23 190.60 197.96" y="533" font-size="13" fill="#000" transform="scale(0.95,1)" >2712023</text><text x="107.12 115.69" y="533" font-size="13" fill="#000" transform="scale(1.40,1)" >//</text><text x="214.81 222.17 232.70 240.07" y="533" font-size="13" fill="#000" transform="scale(0.95,1)" >0807</text><text x="256.43" y="533" font-size="13" fill="#000" transform="scale(0.85,1)" >:</text><text x="256.91 264.28 274.81 282.17" y="533" font-size="13" fill="#000" transform="scale(0.95,1)" >1304</text><text x="303.49" y="533" font-size="13" fill="#000" transform="scale(0.85,1)" >:</text><text x="316.91 324.28 334.81 342.17 352.70 360.07" y="533" font-size="13" fill="#000" transform="scale(0.95,1)" >035700</text><text x="370.55 390.55" y="533" font-size="13" fill="#000" transform="scale(0.85,1)" >::</text><text x="393.44" y="533" font-size="13" fill="#000" transform="scale(0.90,1)" >V</text><text x="425.84" y="533" font-size="13" fill="#000" transform="scale(0.85,1)" >I</text><text x="521.38 552.81 561.38" y="533" font-size="13" fill="#000" transform="scale(0.70,1)" >EES</text><text x="494.64" y="533" font-size="13" fill="#000" transform="scale(0.75,1)" >R</text><text x="397.94" y="533" font-size="13" fill="#000" transform="scale(0.95,1)" >N</text><text x="667.57 721.41 933.72" y="533" font-size="13" fill="#000" transform="scale(0.65,1)" >TTT</text><text x="585.31 685.31 858.64" y="533" font-size="13" fill="#000" transform="scale(0.75,1)" >RRR</text><text x="424.71 595.31 604.71 628.52" y="533" font-size="13" fill="#000" transform="scale(1.05,1)" >ACAA</text><text x="455.09 521.09 540.94 611.94" y="533" font-size="13" fill="#000" >MMOO</text><text x="548.19 625.84 786.97" y="533" font-size="13" fill="#000" transform="scale(0.85,1)" >IIL</text><text x="677.09 702.81 725.66 764.24 787.09 812.81 825.66 845.66" y="533" font-size="13" fill="#000" transform="scale(0.70,1)" >EEESSEEE</text><text x="508.46 589.52 629.52 685.31" y="533" font-size="13" fill="#000" transform="scale(0.95,1)" >DDNN</text><text x="626.29" y="533" font-size="13" fill="#000" transform="scale(0.80,1)" >P</text><text x="649.00" y="533" font-size="13" fill="#000" transform="scale(0.90,1)" >V</text><text x="33.75 41.12 53.75 66.39 73.75 81.12 88.49" y="552" font-size="13" fill="#000" transform="scale(0.95,1)" >3012023</text><text x="32.84 41.41" y="552" font-size="13" fill="#000" transform="scale(1.40,1)" >//</text><text x="143.23 150.60 163.23 175.86 183.23 190.60 197.96" y="552" font-size="13" fill="#000" transform="scale(0.95,1)" >3012023</text><text x="107.12 115.69" y="552" font-size="13" fill="#000" transform="scale(1.40,1)" >//</text><text x="214.81 222.17 232.70 240.07" y="552" font-size="13" fill="#000" transform="scale(0.95,1)" >0758</text><text x="256.43" y="552" font-size="13" fill="#000" transform="scale(0.85,1)" >:</text><text x="256.91 264.28 274.81 282.17" y="552" font-size="13" fill="#000" transform="scale(0.95,1)" >1417</text><text x="303.49" y="552" font-size="13" fill="#000" transform="scale(0.85,1)" >:</text><text x="316.91 324.28 334.81 342.17 352.70 360.07" y="552" font-size="13" fill="#000" transform="scale(0.95,1)" >051900</text><text x="370.55 390.55" y="552" font-size="13" fill="#000" transform="scale(0.85,1)" >::</text><text x="416.39 423.54" y="552" font-size="13" fill="#000" transform="scale(0.85,1)" >LU</text><text x="387.41" y="552" font-size="13" fill="#000" transform="scale(0.95,1)" >N</text><text x="538.52 547.09" y="552" font-size="13" fill="#000" transform="scale(0.70,1)" >ES</text><text x="667.57 721.41 933.72" y="552" font-size="13" fill="#000" transform="scale(0.65,1)" >TTT</text><text x="585.31 685.31 858.64" y="552" font-size="13" fill="#000" transform="scale(0.75,1)" >RRR</text><text x="424.71 595.31 604.71 628.52" y="552" font-size="13" fill="#000" transform="scale(1.05,1)" >ACAA</text><text x="455.09 521.09 540.94 611.94" y="552" font-size="13" fill="#000" >MMOO</text><text x="548.19 625.84 786.97" y="552" font-size="13" fill="#000" transform="scale(0.85,1)" >IIL</text><text x="677.09 702.81 725.66 764.24 787.09 812.81 825.66 845.66" y="552" font-size="13" fill="#000" transform="scale(0.70,1)" >EEESSEEE</text><text x="508.46 589.52 629.52 685.31" y="552" font-size="13" fill="#000" transform="scale(0.95,1)" >DDNN</text><text x="626.29" y="552" font-size="13" fill="#000" transform="scale(0.80,1)" >P</text><text x="649.00" y="552" font-size="13" fill="#000" transform="scale(0.90,1)" >V</text><text x="33.75 41.12 53.75 66.39 73.75 81.12 88.49" y="571" font-size="13" fill="#000" transform="scale(0.95,1)" >3112023</text><text x="32.84 41.41" y="571" font-size="13" fill="#000" transform="scale(1.40,1)" >//</text><text x="143.23 150.60 163.23 175.86 183.23 190.60 197.96" y="571" font-size="13" fill="#000" transform="scale(0.95,1)" >3112023</text><text x="107.12 115.69" y="571" font-size="13" fill="#000" transform="scale(1.40,1)" >//</text><text x="214.81 222.17 232.70 240.07" y="571" font-size="13" fill="#000" transform="scale(0.95,1)" >0757</text><text x="256.43" y="571" font-size="13" fill="#000" transform="scale(0.85,1)" >:</text><text x="256.91 264.28 274.81 282.17" y="571" font-size="13" fill="#000" transform="scale(0.95,1)" >1304</text><text x="303.49" y="571" font-size="13" fill="#000" transform="scale(0.85,1)" >:</text><text x="316.91 324.28 334.81 342.17 352.70 360.07" y="571" font-size="13" fill="#000" transform="scale(0.95,1)" >040700</text><text x="370.55 390.55" y="571" font-size="13" fill="#000" transform="scale(0.85,1)" >::</text><text x="354.09" y="571" font-size="13" fill="#000" >M</text><text x="347.57" y="571" font-size="13" fill="#000" transform="scale(1.05,1)" >A</text><text x="498.64" y="571" font-size="13" fill="#000" transform="scale(0.75,1)" >R</text><text x="586.03" y="571" font-size="13" fill="#000" transform="scale(0.65,1)" >T</text><text x="551.38 559.95" y="571" font-size="13" fill="#000" transform="scale(0.70,1)" >ES</text><text x="667.57 721.41 933.72" y="571" font-size="13" fill="#000" transform="scale(0.65,1)" >TTT</text><text x="585.31 685.31 858.64" y="571" font-size="13" fill="#000" transform="scale(0.75,1)" >RRR</text><text x="424.71 595.31 604.71 628.52" y="571" font-size="13" fill="#000" transform="scale(1.05,1)" >ACAA</text><text x="455.09 521.09 540.94 611.94" y="571" font-size="13" fill="#000" >MMOO</text><text x="548.19 625.84 786.97" y="571" font-size="13" fill="#000" transform="scale(0.85,1)" >IIL</text><text x="677.09 702.81 725.66 764.24 787.09 812.81 825.66 845.66" y="571" font-size="13" fill="#000" transform="scale(0.70,1)" >EEESSEEE</text><text x="508.46 589.52 629.52 685.31" y="571" font-size="13" fill="#000" transform="scale(0.95,1)" >DDNN</text><text x="626.29" y="571" font-size="13" fill="#000" transform="scale(0.80,1)" >P</text><text x="649.00" y="571" font-size="13" fill="#000" transform="scale(0.90,1)" >V</text><text x="36.91 49.54 62.17 69.54 76.91 84.28" y="590" font-size="13" fill="#000" transform="scale(0.95,1)" >122023</text><text x="29.98 38.55" y="590" font-size="13" fill="#000" transform="scale(1.40,1)" >//</text><text x="146.39 159.02 171.65 179.02 186.39 193.75" y="590" font-size="13" fill="#000" transform="scale(0.95,1)" >122023</text><text x="104.27 112.84" y="590" font-size="13" fill="#000" transform="scale(1.40,1)" >//</text><text x="214.81 222.17 232.70 240.07" y="590" font-size="13" fill="#000" transform="scale(0.95,1)" >0800</text><text x="256.43" y="590" font-size="13" fill="#000" transform="scale(0.85,1)" >:</text><text x="256.91 264.28 274.81 282.17" y="590" font-size="13" fill="#000" transform="scale(0.95,1)" >1540</text><text x="303.49" y="590" font-size="13" fill="#000" transform="scale(0.85,1)" >:</text><text x="316.91 324.28 334.81 342.17 352.70 360.07" y="590" font-size="13" fill="#000" transform="scale(0.95,1)" >064000</text><text x="370.55 390.55" y="590" font-size="13" fill="#000" transform="scale(0.85,1)" >::</text><text x="354.09 390.94" y="590" font-size="13" fill="#000" >MO</text><text x="429.37 471.68" y="590" font-size="13" fill="#000" transform="scale(0.85,1)" >IL</text><text x="525.66 581.38 589.95" y="590" font-size="13" fill="#000" transform="scale(0.70,1)" >ÉES</text><text x="498.64" y="590" font-size="13" fill="#000" transform="scale(0.75,1)" >R</text><text x="362.92" y="590" font-size="13" fill="#000" transform="scale(1.05,1)" >C</text><text x="667.57 721.41 933.72" y="590" font-size="13" fill="#000" transform="scale(0.65,1)" >TTT</text><text x="585.31 685.31 858.64" y="590" font-size="13" fill="#000" transform="scale(0.75,1)" >RRR</text><text x="424.71 595.31 604.71 628.52" y="590" font-size="13" fill="#000" transform="scale(1.05,1)" >ACAA</text><text x="455.09 521.09 540.94 611.94" y="590" font-size="13" fill="#000" >MMOO</text><text x="548.19 625.84 786.97" y="590" font-size="13" fill="#000" transform="scale(0.85,1)" >IIL</text><text x="677.09 702.81 725.66 764.24 787.09 812.81 825.66 845.66" y="590" font-size="13" fill="#000" transform="scale(0.70,1)" >EEESSEEE</text><text x="508.46 589.52 629.52 685.31" y="590" font-size="13" fill="#000" transform="scale(0.95,1)" >DDNN</text><text x="626.29" y="590" font-size="13" fill="#000" transform="scale(0.80,1)" >P</text><text x="649.00" y="590" font-size="13" fill="#000" transform="scale(0.90,1)" >V</text><text x="36.91 49.54 62.17 69.54 76.91 84.28" y="618" font-size="13" fill="#000" transform="scale(0.95,1)" >222023</text><text x="29.98 38.55" y="618" font-size="13" fill="#000" transform="scale(1.40,1)" >//</text><text x="146.39 159.02 171.65 179.02 186.39 193.75" y="618" font-size="13" fill="#000" transform="scale(0.95,1)" >222023</text><text x="104.27 112.84" y="618" font-size="13" fill="#000" transform="scale(1.40,1)" >//</text><text x="393.42 415.66" y="618" font-size="13" fill="#000" transform="scale(0.90,1)" >JV</text><text x="423.54" y="618" font-size="13" fill="#000" transform="scale(0.85,1)" >U</text><text x="525.66 545.66 554.24" y="618" font-size="13" fill="#000" transform="scale(0.70,1)" >EES</text><text x="482.33 504.53 577.89 596.75" y="609" font-size="13" fill="#000" transform="scale(0.90,1)" >VJVJ</text><text x="519.96 621.14 707.02 738.78 781.14 795.25 827.02" y="609" font-size="13" fill="#000" transform="scale(0.85,1)" >IIIIIII</text><text x="423.76 446.62 529.59 539.00 554.24 562.92 579.95 588.64" y="609" font-size="13" fill="#000" transform="scale(1.05,1)" >AACAACAC</text><text x="657.09 758.52 969.95 985.66 1039.95" y="609" font-size="13" fill="#000" transform="scale(0.70,1)" >EESEE</text><text x="601.29 718.79" y="609" font-size="13" fill="#000" transform="scale(0.80,1)" >PP</text><text x="487.94 509.94 542.94 630.94 653.09 705.94" y="609" font-size="13" fill="#000" >OOOÓMO</text><text x="663.97 927.97" y="609" font-size="13" fill="#000" transform="scale(0.75,1)" >RR</text><text x="776.80 929.11 1053.72" y="609" font-size="13" fill="#000" transform="scale(0.65,1)" >TTT</text><text x="674.78 702.15 756.88" y="609" font-size="13" fill="#000" transform="scale(0.95,1)" >NND</text><text x="578.70 626.70" y="628" font-size="13" fill="#000" transform="scale(0.75,1)" >FZ</text><text x="517.61" y="628" font-size="13" fill="#000" transform="scale(0.85,1)" >I</text><text x="466.36 485.31" y="628" font-size="13" fill="#000" transform="scale(0.95,1)" >NN</text><text x="430.43 453.28" y="628" font-size="13" fill="#000" transform="scale(1.05,1)" >AA</text><text x="692.81" y="628" font-size="13" fill="#000" transform="scale(0.70,1)" >S</text><text x="36.91 49.54 62.17 69.54 76.91 84.28" y="647" font-size="13" fill="#000" transform="scale(0.95,1)" >322023</text><text x="29.98 38.55" y="647" font-size="13" fill="#000" transform="scale(1.40,1)" >//</text><text x="146.39 159.02 171.65 179.02 186.39 193.75" y="647" font-size="13" fill="#000" transform="scale(0.95,1)" >322023</text><text x="104.27 112.84" y="647" font-size="13" fill="#000" transform="scale(1.40,1)" >//</text><text x="214.81 222.17 232.70 240.07" y="647" font-size="13" fill="#000" transform="scale(0.95,1)" >0759</text><text x="256.43" y="647" font-size="13" fill="#000" transform="scale(0.85,1)" >:</text><text x="256.91 264.28 274.81 282.17" y="647" font-size="13" fill="#000" transform="scale(0.95,1)" >1700</text><text x="303.49" y="647" font-size="13" fill="#000" transform="scale(0.85,1)" >:</text><text x="316.91 324.28 334.81 342.17 352.70 360.07" y="647" font-size="13" fill="#000" transform="scale(0.95,1)" >080100</text><text x="370.55 390.55" y="647" font-size="13" fill="#000" transform="scale(0.85,1)" >::</text><text x="393.44" y="647" font-size="13" fill="#000" transform="scale(0.90,1)" >V</text><text x="425.84" y="647" font-size="13" fill="#000" transform="scale(0.85,1)" >I</text><text x="521.38 552.81 561.38" y="647" font-size="13" fill="#000" transform="scale(0.70,1)" >EES</text><text x="494.64" y="647" font-size="13" fill="#000" transform="scale(0.75,1)" >R</text><text x="397.94" y="647" font-size="13" fill="#000" transform="scale(0.95,1)" >N</text><text x="36.91 49.54 62.17 69.54 76.91 84.28" y="666" font-size="13" fill="#000" transform="scale(0.95,1)" >622023</text><text x="29.98 38.55" y="666" font-size="13" fill="#000" transform="scale(1.40,1)" >//</text><text x="146.39 159.02 171.65 179.02 186.39 193.75" y="666" font-size="13" fill="#000" transform="scale(0.95,1)" >622023</text><text x="104.27 112.84" y="666" font-size="13" fill="#000" transform="scale(1.40,1)" >//</text><text x="416.39 423.54" y="666" font-size="13" fill="#000" transform="scale(0.85,1)" >LU</text><text x="387.41" y="666" font-size="13" fill="#000" transform="scale(0.95,1)" >N</text><text x="538.52 547.09" y="666" font-size="13" fill="#000" transform="scale(0.70,1)" >ES</text><text x="578.70 594.64 671.97 790.64 849.31" y="666" font-size="13" fill="#000" transform="scale(0.75,1)" >FRRRR</text><text x="628.52 825.66 834.24 857.09 901.38 951.38" y="666" font-size="13" fill="#000" transform="scale(0.70,1)" >EESEEE</text><text x="532.90 654.08 724.72 776.39" y="666" font-size="13" fill="#000" transform="scale(0.85,1)" >IIUL</text><text x="434.24 511.38 520.07 577.21 613.28" y="666" font-size="13" fill="#000" transform="scale(1.05,1)" >AACCA</text><text x="489.52 598.99" y="666" font-size="13" fill="#000" transform="scale(0.95,1)" >DN</text><text x="473.94 493.94 521.94 558.94" y="666" font-size="13" fill="#000" >OOOO</text><text x="608.79 780.04 816.29" y="666" font-size="13" fill="#000" transform="scale(0.80,1)" >PPB</text><text x="571.22" y="666" font-size="13" fill="#000" transform="scale(0.90,1)" >V</text><text x="818.34" y="666" font-size="13" fill="#000" transform="scale(0.65,1)" >T</text><text x="36.91 49.54 62.17 69.54 76.91 84.28" y="685" font-size="13" fill="#000" transform="scale(0.95,1)" >722023</text><text x="29.98 38.55" y="685" font-size="13" fill="#000" transform="scale(1.40,1)" >//</text><text x="146.39 159.02 171.65 179.02 186.39 193.75" y="685" font-size="13" fill="#000" transform="scale(0.95,1)" >722023</text><text x="104.27 112.84" y="685" font-size="13" fill="#000" transform="scale(1.40,1)" >//</text><text x="214.81 222.17 232.70 240.07" y="685" font-size="13" fill="#000" transform="scale(0.95,1)" >0759</text><text x="256.43" y="685" font-size="13" fill="#000" transform="scale(0.85,1)" >:</text><text x="256.91 264.28 274.81 282.17" y="685" font-size="13" fill="#000" transform="scale(0.95,1)" >1700</text><text x="303.49" y="685" font-size="13" fill="#000" transform="scale(0.85,1)" >:</text><text x="316.91 324.28 334.81 342.17 352.70 360.07" y="685" font-size="13" fill="#000" transform="scale(0.95,1)" >080100</text><text x="370.55 390.55" y="685" font-size="13" fill="#000" transform="scale(0.85,1)" >::</text><text x="354.09" y="685" font-size="13" fill="#000" >M</text><text x="347.57" y="685" font-size="13" fill="#000" transform="scale(1.05,1)" >A</text><text x="498.64" y="685" font-size="13" fill="#000" transform="scale(0.75,1)" >R</text><text x="586.03" y="685" font-size="13" fill="#000" transform="scale(0.65,1)" >T</text><text x="551.38 559.95" y="685" font-size="13" fill="#000" transform="scale(0.70,1)" >ES</text></g><g clip-path="url(#gc)"><text x="6.25 13.61" y="268" font-size="13.5" fill="#333" transform="scale(0.95,1)" >19</text></g><g clip-path="url(#gc)"><text x="6.25 13.61" y="287" font-size="13.5" fill="#333" transform="scale(0.95,1)" >20</text></g><g clip-path="url(#gc)"><text x="6.25 13.61" y="306" font-size="13.5" fill="#333" transform="scale(0.95,1)" >21</text></g><g clip-path="url(#gc)"><text x="6.25 13.61" y="325" font-size="13.5" fill="#333" transform="scale(0.95,1)" >22</text></g><g clip-path="url(#gc)"><text x="6.25 13.61" y="344" font-size="13.5" fill="#333" transform="scale(0.95,1)" >23</text></g><g clip-path="url(#gc)"><text x="6.25 13.61" y="363" font-size="13.5" fill="#333" transform="scale(0.95,1)" >24</text></g><g clip-path="url(#gc)"><text x="6.25 13.61" y="382" font-size="13.5" fill="#333" transform="scale(0.95,1)" >25</text></g><g clip-path="url(#gc)"><text x="6.25 13.61" y="401" font-size="13.5" fill="#333" transform="scale(0.95,1)" >26</text></g><g clip-path="url(#gc)"><text x="6.25 13.61" y="420" font-size="13.5" fill="#333" transform="scale(0.95,1)" >27</text></g><g clip-path="url(#gc)"><text x="6.25 13.61" y="439" font-size="13.5" fill="#333" transform="scale(0.95,1)" >28</text></g><g clip-path="url(#gc)"><text x="6.25 13.61" y="458" font-size="13.5" fill="#333" transform="scale(0.95,1)" >29</text></g><g clip-path="url(#gc)"><text x="6.25 13.61" y="477" font-size="13.5" fill="#333" transform="scale(0.95,1)" >30</text></g><g clip-path="url(#gc)"><text x="6.25 13.61" y="496" font-size="13.5" fill="#333" transform="scale(0.95,1)" >31</text></g><g clip-path="url(#gc)"><text x="6.25 13.61" y="515" font-size="13.5" fill="#333" transform="scale(0.95,1)" >32</text></g><g clip-path="url(#gc)"><text x="6.25 13.61" y="534" font-size="13.5" fill="#333" transform="scale(0.95,1)" >33</text></g><g clip-path="url(#gc)"><text x="6.25 13.61" y="553" font-size="13.5" fill="#333" transform="scale(0.95,1)" >34</text></g><g clip-path="url(#gc)"><text x="6.25 13.61" y="572" font-size="13.5" fill="#333" transform="scale(0.95,1)" >35</text></g><g clip-path="url(#gc)"><text x="6.25 13.61" y="591" font-size="13.5" fill="#333" transform="scale(0.95,1)" >36</text></g><g clip-path="url(#gc)"><text x="6.25 13.61" y="629" font-size="13.5" fill="#333" transform="scale(0.95,1)" >37</text></g><g clip-path="url(#gc)"><text x="6.25 13.61" y="648" font-size="13.5" fill="#333" transform="scale(0.95,1)" >38</text></g><g clip-path="url(#gc)"><text x="6.25 13.61" y="667" font-size="13.5" fill="#333" transform="scale(0.95,1)" >39</text></g><g clip-path="url(#gc)"><text x="6.25 13.61" y="686" font-size="13.5" fill="#333" transform="scale(0.95,1)" >40</text></g><text x="50.95" y="250" font-size="13.5" fill="#333" transform="scale(1.10,1)" >A</text><text x="136.75" y="250" font-size="13.5" fill="#333" transform="scale(0.80,1)" >B</text><text x="138.60" y="250" font-size="13.5" fill="#333" transform="scale(1.15,1)" >C</text><text x="204.65" y="250" font-size="13.5" fill="#333" transform="scale(1.05,1)" >D</text><text x="319.25" y="250" font-size="13.5" fill="#333" transform="scale(0.80,1)" >E</text><text x="415.88" y="250" font-size="13.5" fill="#333" transform="scale(0.75,1)" >F</text><text x="367.61" y="250" font-size="13.5" fill="#333" transform="scale(1.05,1)" >G</text><text x="646.24" y="250" font-size="13.5" fill="#217346" transform="scale(0.90,1)" >H</text><text x="973.75" y="250" font-size="13.5" fill="#333" transform="scale(0.80,1)" >I</text><text x="952.74" y="250" font-size="13.5" fill="#333" transform="scale(0.90,1)" >J</text><text x="1040.50" y="250" font-size="13.5" fill="#333" transform="scale(0.90,1)" >K</text><text x="1271.87" y="250" font-size="13.5" fill="#333" transform="scale(0.80,1)" >L</text><text x="1042.47" y="250" font-size="13.5" fill="#333" transform="scale(1.05,1)" >M</text><text x="1119.41" y="250" font-size="13.5" fill="#333" transform="scale(1.05,1)" >N</text><text x="1195.23" y="250" font-size="13.5" fill="#333" transform="scale(1.05,1)" >O</text><rect x="1337" y="240" width="1" height="10" fill="#333"/></svg>
<div class="a" style="left:1338px;top:237px;width:22px;height:442px;background:#e6e6e6"></div>
<div class="a" style="left:1342px;top:239px;width:15px;height:15px;background:#fff;border:1px solid #ababab"></div>
<svg style="left:1345px;top:243px" width="9" height="6" viewBox="0 0 9 6"><path d="M0 5.5 L4.5 0.5 L9 5.5 Z" fill="#222"/></svg>
<div class="a" style="left:1342px;top:254px;width:15px;height:410px;background:#f0f0f0"></div>
<div class="a" style="left:1342px;top:267px;width:15px;height:17px;background:#fff;border:1px solid #ababab"></div>
<div class="a" style="left:1338px;top:253px;width:1px;height:425px;background:#ababab"></div>
<div class="a" style="left:1342px;top:664px;width:15px;height:15px;background:#fff;border:1px solid #ababab"></div>
<svg style="left:1345px;top:669px" width="9" height="6" viewBox="0 0 9 6"><path d="M0 0.5 L4.5 5.5 L9 0.5 Z" fill="#222"/></svg>
<div class="a" style="left:0;top:678px;width:1360px;height:29px;background:#e6e6e6;border-top:1px solid #a0a0a0;border-bottom:1px solid #c4c4c4"></div>
<svg style="left:20px;top:684px" width="45" height="14" viewBox="20 684 45 14"><path d="M31 688 L27 691.5 L31 695 Z M56 688 L60 691.5 L56 695 Z" fill="#b5b5b5"/></svg>
<div class="a" style="left:100px;top:678px;width:135px;height:25px;background:#fff;border-left:1px solid #9a9a9a;border-right:1px solid #9a9a9a"></div>
<div class="a" style="left:100px;top:701px;width:135px;height:2px;background:#1e6e3e"></div>
<div class="t " style="left:112.50px;top:685.82px;font-size:12.5px;color:#217346;font-weight:bold;transform:scaleX(0.9850);">Entradas y Salidas</div>
<svg style="left:266px;top:683px" width="20" height="20" viewBox="266 683 20 20">
<circle cx="276" cy="692" r="7.5" fill="none" stroke="#777" stroke-width="1.2"/>
<path d="M272 692 H280 M276 688 V696" stroke="#777" stroke-width="1.5"/></svg>
<svg style="left:814px;top:684px" width="6" height="16" viewBox="0 0 6 16"><g fill="#a0a0a0"><rect x="2" y="2" width="2" height="2"/><rect x="2" y="7" width="2" height="2"/><rect x="2" y="11" width="2" height="2"/></g></svg>
<div class="a" style="left:833px;top:685px;width:506px;height:15px;background:#f0f0f0"></div>
<div class="a" style="left:833px;top:685px;width:15px;height:15px;background:#fff;border:1px solid #ababab"></div>
<div class="a" style="left:847px;top:685px;width:303px;height:15px;background:#fff;border:1px solid #ababab"></div>
<div class="a" style="left:1324px;top:685px;width:15px;height:15px;background:#fff;border:1px solid #ababab"></div>
<svg style="left:836px;top:687px" width="50" height="12" viewBox="0 0 50 12"><path d="M2.5 5 L7.5 0.5 L7.5 9.5 Z" fill="#222"/></svg>
<svg style="left:1328px;top:687px" width="10" height="12" viewBox="0 0 10 12"><path d="M7.5 5 L2.5 0.5 L2.5 9.5 Z" fill="#222"/></svg>
<div class="a" style="left:0;top:707px;width:1360px;height:21px;background:#f3f3f3"></div>
<div class="t " style="left:7.30px;top:711.54px;font-size:12px;color:#333;font-weight:normal;transform:scaleX(0.9113);">Listo</div>
<svg style="left:48px;top:708px" width="20" height="18" viewBox="48 708 20 18">
<path d="M57 712 A6 6 0 1 0 58 723.5" fill="none" stroke="#555" stroke-width="1.3" stroke-dasharray="2 1.3"/>
<path d="M55.5 709.5 V717 H61" fill="none" stroke="#555" stroke-width="1.3"/>
<path d="M58.5 716.5 L66 724 M66 716.5 L58.5 724" stroke="#444" stroke-width="1.7"/></svg>
<div class="t " style="left:69.00px;top:711.54px;font-size:12px;color:#333;font-weight:normal;transform:scaleX(0.9462);">Accesibilidad: es necesario investigar</div>
<div class="a" style="left:1060px;top:707px;width:40px;height:21px;background:#d2d2d2"></div>
<svg style="left:1060px;top:706px" width="300" height="22" viewBox="1060 706 300 22">
<g fill="none" stroke="#666" stroke-width="1">
<rect x="1073.5" y="710.5" width="13" height="12"/><path d="M1073.5 714.5 H1086.5 M1073.5 718.5 H1086.5 M1077.5 710.5 V722.5 M1082.5 710.5 V722.5"/>
<rect x="1113.5" y="710.5" width="13" height="12"/><rect x="1116.5" y="713.5" width="7" height="6"/><path d="M1118 715.5 H1122 M1118 717.5 H1122"/>
<rect x="1153.5" y="710.5" width="13" height="12"/><path d="M1157.5 710.5 V716.5 M1161.5 710.5 V716.5 M1153.5 716.5 H1161.5"/>
</g>
<path d="M1185 716.5 H1194 M1200 716.5 H1298 M1303 716.5 H1312 M1307.5 712 V721" stroke="#666" stroke-width="1"/>
<rect x="1246.5" y="711" width="4" height="11" fill="#555"/>
</svg>
<div class="t " style="left:1325.00px;top:711.54px;font-size:12px;color:#333;font-weight:normal;transform:scaleX(0.8602);">100%</div>
<div class="a" style="left:0;top:728px;width:1360px;height:40px;background:#101010"></div>
<div class="a" style="left:295px;top:728px;width:48px;height:40px;background:#2e2e2e"></div>
<div class="a" style="left:103px;top:766px;width:40px;height:2px;background:#76b9ed"></div>
<div class="a" style="left:250px;top:766px;width:31px;height:2px;background:#76b9ed"></div>
<div class="a" style="left:295px;top:766px;width:48px;height:2px;background:#76b9ed"></div>
<div class="a" style="left:397px;top:766px;width:40px;height:2px;background:#76b9ed"></div>
<div class="a" style="left:446px;top:766px;width:40px;height:2px;background:#76b9ed"></div>
<div class="a" style="left:494px;top:766px;width:40px;height:2px;background:#76b9ed"></div>
<div class="a" style="left:282px;top:766px;width:8px;height:2px;background:#4b7a9e"></div>
<svg style="left:0;top:728px" width="1360" height="40" viewBox="0 728 1360 40">
<g fill="#fff"><path d="M16 741.2 L22 740.4 V747 H16 Z M23 740.3 L32 739.6 V747 H23 Z M16 748 H22 V755.4 L16 754.6 Z M23 748 H32 V756.3 L23 755.5 Z"/></g>
<g fill="none" stroke="#fff" stroke-width="1.2"><circle cx="74.6" cy="745.4" r="5.3"/><path d="M70.8 749.3 L64.4 755.7" stroke-width="1.4"/></g>
<!-- edge -->
<defs>
<linearGradient id="eg1" x1="0" y1="0" x2="1" y2="0.8"><stop offset="0" stop-color="#2fc0f0"/><stop offset="0.5" stop-color="#27b3b8"/><stop offset="1" stop-color="#6fe05a"/></linearGradient>
<linearGradient id="eg2" x1="0" y1="0" x2="0.3" y2="1"><stop offset="0" stop-color="#27a0ea"/><stop offset="1" stop-color="#0b63c4"/></linearGradient>
</defs>
<circle cx="123" cy="748" r="12" fill="url(#eg2)"/>
<path d="M126 752 C129 754.5 133 754.5 134.5 752.5 C132.5 757 128 760 123 760 C120 760 118.5 757 118.5 753 C118.5 749.5 120.5 747 123 746.5 Z" fill="#0f55a8"/>
<path d="M111.1 746.5 A12 12 0 0 1 135 748.5 C135 751.5 132.5 753 129.5 752.8 C126.5 752.6 125 751 125.5 749 C126 747 125 744.5 122 744 C118 743.5 114 744.5 111.1 746.5 Z" fill="url(#eg1)"/>
<path d="M122 744 C125 744.5 126 747 125.5 749 C125 751 126.5 752.6 129.5 752.8 C131.5 752.9 133.5 752.3 134.6 751.3 C134 752.6 133 753.6 131.5 754.2 C128.5 755 124.5 754.5 122 752 C119.5 749.5 119.8 745.5 122 744 Z" fill="#101010"/>
<path d="M122 752 C124.5 754.5 128.5 755 131.5 754.2 C129 756.5 125 757 122.5 755 C120.5 753.5 120 751 120.3 749.5 Z" fill="#1465b8"/>
<!-- chrome -->
<circle cx="172" cy="747.5" r="12" fill="#e94235"/>
<path d="M172 747.5 L161.6 753.5 A12 12 0 0 0 178 758 Z" fill="#34a853"/>
<path d="M172 747.5 L178 758 A12 12 0 0 0 184 747.5 A12 12 0 0 0 182.4 741.5 H172 Z" fill="#fbbc04"/>
<path d="M172 747.5 L161.6 741.5 A12 12 0 0 0 161.6 753.5 Z" fill="#34a853"/>
<circle cx="172" cy="747.5" r="5.4" fill="#fff"/><circle cx="172" cy="747.5" r="4.2" fill="#4285f4"/>
<!-- word -->
<rect x="215" y="737" width="18" height="21" rx="1" fill="#41a5ee"/>
<rect x="215" y="742" width="18" height="5.5" fill="#2b7cd3"/><rect x="215" y="747.5" width="18" height="5" fill="#185abd"/>
<path d="M215 752.5 H233 V757 Q233 758 232 758 H216 Q215 758 215 757 Z" fill="#103f91"/>
<rect x="209" y="742.2" width="12.4" height="11.7" rx="1" fill="#185abd"/>
<text x="209.8" y="752" font-size="10" font-weight="bold" fill="#fff">W</text>
<!-- explorer -->
<path d="M259 739 H266.5 L268.5 741 H259 Z" fill="#e8a317"/>
<rect x="259" y="740" width="21.8" height="16.3" fill="#ffd662"/>
<rect x="259" y="740" width="21.8" height="1.5" fill="#f5c342"/>
<path d="M263 757 V748.7 H277 V757 H273 V752 H267 V757 Z" fill="#3d9be9"/>
<!-- excel -->
<rect x="313" y="737" width="18" height="21" rx="1" fill="#21a366"/>
<rect x="322" y="737" width="9" height="7" fill="#33c481"/>
<rect x="313" y="744" width="9" height="7" fill="#107c41"/><rect x="322" y="744" width="9" height="7" fill="#21a366"/>
<path d="M313 751 H322 V758 H314 Q313 758 313 757 Z" fill="#185c37"/><path d="M322 751 H331 V757 Q331 758 330 758 H322 Z" fill="#107c41"/>
<rect x="307.1" y="742.2" width="12.4" height="11.7" rx="1" fill="#107c41"/>
<text x="310" y="752" font-size="10.5" font-weight="bold" fill="#fff">X</text>
<!-- firefox -->
<defs><linearGradient id="ffg" x1="0.8" y1="0" x2="0.3" y2="1"><stop offset="0" stop-color="#ffe14a"/><stop offset="0.45" stop-color="#ff7a1f"/><stop offset="0.8" stop-color="#ff3a5e"/><stop offset="1" stop-color="#e31587"/></linearGradient>
<radialGradient id="ffp" cx="0.4" cy="0.35" r="0.7"><stop offset="0" stop-color="#9a6cf0"/><stop offset="1" stop-color="#5b2fc9"/></radialGradient></defs>
<path d="M374 735.5 C380 739 382 746 379 752 C376 758 369 760 363 758.5 C357 756.5 353.5 751 354.5 745 C355 742 356.5 740 358 739 C358 741 359 742 360 742.5 C361 740 363 738.5 366 738 C369 737.5 372 738.5 373.5 740 C374.5 738.5 374.5 737 374 735.5 Z" fill="url(#ffg)"/>
<circle cx="367.5" cy="748.5" r="5.2" fill="url(#ffp)"/>
<path d="M358 744 C361 742 365 742 368 743.5 C365 744 362 745.5 360.5 748 C359.5 746.5 358.5 745.5 358 744 Z" fill="#ff8a2a"/>
<!-- spotify -->
<circle cx="417" cy="747.5" r="11.5" fill="#1ed760"/>
<g fill="none" stroke="#101010" stroke-linecap="round"><path d="M410 743.5 C414 742 420 742.3 424.5 744.8" stroke-width="2.1"/><path d="M410.8 747.5 C414.5 746.4 419 746.7 422.8 748.6" stroke-width="1.8"/><path d="M411.5 751.2 C414.5 750.5 418 750.7 421 752.2" stroke-width="1.5"/></g>
<!-- chrome 2 -->
<circle cx="465" cy="747.5" r="12" fill="#e94235"/>
<path d="M465 747.5 L454.6 753.5 A12 12 0 0 0 471 758 Z" fill="#34a853"/>
<path d="M465 747.5 L471 758 A12 12 0 0 0 477 747.5 A12 12 0 0 0 475.4 741.5 H465 Z" fill="#fbbc04"/>
<path d="M465 747.5 L454.6 741.5 A12 12 0 0 0 454.6 753.5 Z" fill="#34a853"/>
<circle cx="465" cy="747.5" r="5.4" fill="#fff"/><circle cx="465" cy="747.5" r="4.2" fill="#4285f4"/>
<circle cx="472" cy="754" r="6" fill="#9a9a9a"/><circle cx="472" cy="754" r="4.8" fill="#cfcfcf"/><path d="M468 751 L471 756 M476 751 L473 756 M469.5 755 H474.5" stroke="#444" stroke-width="1.3"/><circle cx="472" cy="757" r="1.5" fill="#333"/>
<!-- paint -->
<path d="M504 747 C504 741 510 738 517 738.5 C523 739 527 743 526 748.5 C525 752 521.5 752.5 519.5 751 C517.5 749.5 515 750.5 515.5 753 C516 756 512 757.5 508.5 756 C505.5 754.5 504 751 504 747 Z" fill="#d4e6f4"/>
<circle cx="507.5" cy="748.5" r="1.7" fill="#e8453c"/><circle cx="511" cy="744.5" r="1.7" fill="#6cc04a"/><circle cx="515.5" cy="742.5" r="1.7" fill="#f5b43a"/>
<circle cx="512.5" cy="750.5" r="1.3" fill="#1a1a1a"/>
<path d="M515 758 L525.5 741 L527 742 L517 758.5 Z" fill="#e08a2e"/>
<path d="M524.5 741.5 L529 735 L530.5 736 L527 743 Z" fill="#d9a46a"/>
<!-- tray -->
<g fill="none" stroke="#fff" stroke-width="1.2">
<path d="M1093 751 L1099.3 744.5 L1105.6 751"/>
<rect x="1118.5" y="743.5" width="7.5" height="9" rx="1.5"/><path d="M1126 746.5 L1129.5 744.5 V752 L1126 750"/>
<path d="M1118 741 C1121 739.5 1125 739.5 1128 741 M1118 755.5 C1121 757 1125 757 1128 755.5" stroke-width="1"/>
<path d="M1139.5 742 L1154.5 740 V756 L1139.5 754 Z"/>
<path d="M1144.5 747.5 A4 4 0 0 1 1150.5 744.5 M1149.5 748.5 A4 4 0 0 1 1143.5 751.5 M1149 743.5 L1150.6 744.6 L1149.6 746.3 M1144.5 752.5 L1143.3 751.4 L1144.4 749.7" stroke-width="1"/>
<rect x="1163.5" y="742.5" width="15" height="9.5"/><path d="M1171 752 V754.5 M1167 754.5 H1175.5 M1165.5 748 V755"/>
<rect x="1163.5" y="742.5" width="5" height="5" fill="#101010"/><path d="M1164.8 744.5 L1166 745.8 L1167.3 744.2" stroke-width="0.9"/>
<path d="M1187.5 745.5 H1190.5 L1194.5 741.5 V755.5 L1190.5 751.5 H1187.5 Z"/>
<path d="M1197 745.5 A4 4 0 0 1 1197 751.5 M1199.5 743 A7 7 0 0 1 1199.5 754" stroke-width="1"/>
<path d="M1202 741 A10 10 0 0 1 1202 756" stroke="#777" stroke-width="1"/>
<path d="M1319.5 740.5 H1335.5 V752.5 H1330.5 L1327.5 755.5 L1324.5 752.5 H1319.5 Z"/>
</g>
<circle cx="1151.4" cy="752.4" r="3.4" fill="#ff9800" stroke="#101010" stroke-width="0.8"/>
<rect x="1355" y="728" width="1" height="40" fill="#555"/>
</svg>
<div class="t " style="left:1215.50px;top:742.04px;font-size:12px;color:#fff;font-weight:normal;transform:scaleX(0.7455);">ESP</div>
<div class="t " style="left:1261.20px;top:733.14px;font-size:12px;color:#fff;font-weight:normal;transform:scaleX(0.8925);">16:39</div>
<div class="t " style="left:1249.90px;top:751.34px;font-size:12px;color:#fff;font-weight:normal;transform:scaleX(0.9516);">17/3/2023</div></body></html>
